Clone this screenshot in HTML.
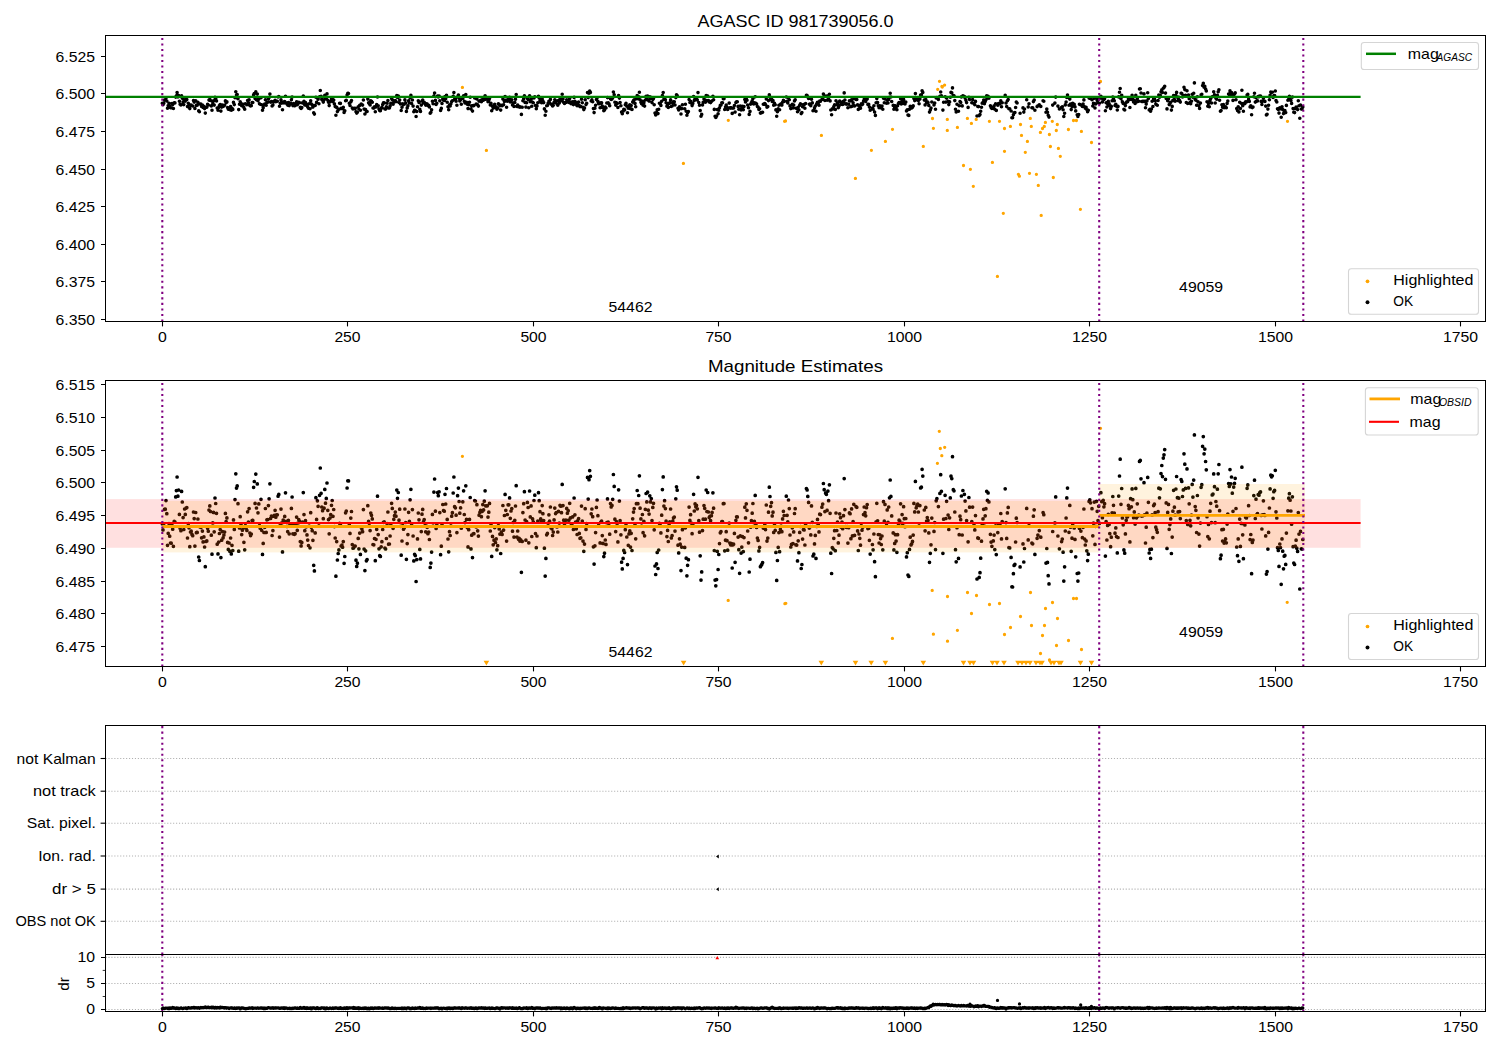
<!DOCTYPE html><html><head><meta charset="utf-8"><style>html,body{margin:0;padding:0;background:#fff;overflow:hidden}svg{display:block}</style></head><body><svg width="1500" height="1050" viewBox="0 0 1500 1050" font-family='"Liberation Sans", sans-serif'>
<rect width="1500" height="1050" fill="#fff"/>
<text x="795.5" y="27.2" font-size="17.00" text-anchor="middle" textLength="196.1" lengthAdjust="spacingAndGlyphs">AGASC ID 981739056.0</text>
<path d="M162.3 103.3h0M163.0 104.7h0M163.8 103.3h0M164.5 100.0h0M165.3 99.9h0M166.0 98.0h0M166.8 101.0h0M167.5 108.2h0M168.2 105.5h0M169.0 103.3h0M169.7 106.2h0M170.5 107.7h0M171.2 107.8h0M171.9 103.5h0M172.7 104.6h0M173.4 108.5h0M174.2 102.8h0M174.9 102.9h0M175.7 97.1h0M176.4 95.7h0M177.1 92.5h0M177.9 97.0h0M178.6 95.5h0M179.4 101.2h0M180.1 104.3h0M180.9 104.9h0M181.6 95.9h0M182.3 98.3h0M183.1 101.9h0M183.8 104.6h0M184.6 99.9h0M185.3 101.1h0M186.0 99.7h0M186.8 99.6h0M187.5 106.6h0M188.3 103.3h0M189.0 104.2h0M189.8 108.6h0M190.5 105.2h0M191.2 105.0h0M192.0 105.7h0M192.7 106.0h0M193.5 100.6h0M194.2 102.1h0M194.9 108.4h0M195.7 100.7h0M196.4 105.3h0M197.2 105.3h0M197.9 102.2h0M198.7 110.9h0M199.4 111.7h0M200.1 104.1h0M200.9 104.1h0M201.6 106.5h0M202.4 105.0h0M203.1 107.5h0M203.9 106.3h0M204.6 108.6h0M205.3 113.1h0M206.1 107.3h0M206.8 107.2h0M207.6 104.3h0M208.3 105.0h0M209.0 100.1h0M209.8 99.2h0M210.5 100.5h0M211.3 105.9h0M212.0 110.3h0M212.8 103.1h0M213.5 100.7h0M214.2 105.1h0M215.0 97.4h0M215.7 98.6h0M216.5 100.9h0M217.2 108.0h0M218.0 110.2h0M218.7 107.5h0M219.4 105.5h0M220.2 104.6h0M220.9 111.1h0M221.7 107.1h0M222.4 105.1h0M223.1 106.5h0M223.9 105.9h0M224.6 105.2h0M225.4 100.9h0M226.1 102.8h0M226.9 101.9h0M227.6 107.6h0M228.3 109.2h0M229.1 107.7h0M229.8 109.6h0M230.6 106.6h0M231.3 110.2h0M232.0 108.2h0M232.8 109.4h0M233.5 102.4h0M234.3 104.6h0M235.0 97.7h0M235.8 91.8h0M236.5 95.1h0M237.2 94.6h0M238.0 98.7h0M238.7 109.6h0M239.5 104.2h0M240.2 101.7h0M241.0 103.4h0M241.7 105.8h0M242.4 104.8h0M243.2 104.3h0M243.9 107.5h0M244.7 109.3h0M245.4 103.7h0M246.1 104.3h0M246.9 104.8h0M247.6 100.5h0M248.4 102.9h0M249.1 99.8h0M249.9 105.4h0M250.6 106.0h0M251.3 105.7h0M252.1 102.6h0M252.8 102.5h0M253.6 94.9h0M254.3 93.6h0M255.1 98.6h0M255.8 91.9h0M256.5 99.7h0M257.3 94.1h0M258.0 100.8h0M258.8 98.7h0M259.5 103.7h0M260.2 104.3h0M261.0 97.7h0M261.7 104.8h0M262.5 110.3h0M263.2 107.8h0M264.0 105.3h0M264.7 104.1h0M265.4 99.8h0M266.2 105.3h0M266.9 102.4h0M267.7 102.3h0M268.4 99.1h0M269.1 97.6h0M269.9 94.1h0M270.6 102.1h0M271.4 101.5h0M272.1 106.0h0M272.9 104.9h0M273.6 101.6h0M274.3 101.4h0M275.1 100.2h0M275.8 101.8h0M276.6 101.3h0M277.3 101.2h0M278.1 97.0h0M278.8 96.5h0M279.5 106.3h0M280.3 103.3h0M281.0 99.9h0M281.8 103.1h0M282.5 109.8h0M283.2 102.4h0M284.0 102.9h0M284.7 101.6h0M285.5 96.2h0M286.2 102.7h0M287.0 103.9h0M287.7 105.1h0M288.4 102.5h0M289.2 105.6h0M289.9 103.3h0M290.7 103.4h0M291.4 99.8h0M292.1 97.1h0M292.9 105.6h0M293.6 103.5h0M294.4 105.7h0M295.1 105.6h0M295.9 103.6h0M296.6 101.8h0M297.3 104.8h0M298.1 103.1h0M298.8 102.4h0M299.6 102.7h0M300.3 107.4h0M301.1 108.4h0M301.8 107.6h0M302.5 102.9h0M303.3 96.1h0M304.0 101.2h0M304.8 104.9h0M305.5 102.6h0M306.2 104.0h0M307.0 105.8h0M307.7 107.0h0M308.5 108.3h0M309.2 103.8h0M310.0 108.8h0M310.7 100.8h0M311.4 104.1h0M312.2 104.9h0M312.9 107.1h0M313.7 112.8h0M314.4 114.1h0M315.2 105.4h0M315.9 97.3h0M316.6 102.3h0M317.4 98.0h0M318.1 99.3h0M318.9 103.8h0M319.6 96.8h0M320.3 90.5h0M321.1 96.3h0M321.8 99.4h0M322.6 100.3h0M323.3 102.1h0M324.1 99.7h0M324.8 95.4h0M325.5 98.6h0M326.3 97.5h0M327.0 93.9h0M327.8 100.2h0M328.5 102.3h0M329.2 105.6h0M330.0 102.0h0M330.7 101.2h0M331.5 99.1h0M332.2 98.0h0M333.0 101.6h0M333.7 100.0h0M334.4 103.9h0M335.2 106.6h0M335.9 115.3h0M336.7 107.4h0M337.4 111.6h0M338.2 110.1h0M338.9 109.3h0M339.6 103.2h0M340.4 103.4h0M341.1 108.4h0M341.9 108.2h0M342.6 108.7h0M343.3 107.4h0M344.1 112.4h0M344.8 110.8h0M345.6 100.8h0M346.3 100.4h0M347.1 95.1h0M347.8 93.4h0M348.5 93.5h0M349.3 103.3h0M350.0 105.5h0M350.8 102.0h0M351.5 100.5h0M352.3 108.1h0M353.0 108.9h0M353.7 108.8h0M354.5 108.4h0M355.2 108.4h0M356.0 111.7h0M356.7 113.1h0M357.4 112.3h0M358.2 106.7h0M358.9 109.0h0M359.7 105.4h0M360.4 110.3h0M361.2 104.1h0M361.9 104.5h0M362.6 105.1h0M363.4 100.0h0M364.1 109.1h0M364.9 114.0h0M365.6 109.5h0M366.4 111.8h0M367.1 111.5h0M367.8 99.1h0M368.6 102.7h0M369.3 103.7h0M370.1 104.9h0M370.8 100.8h0M371.5 101.3h0M372.3 102.2h0M373.0 108.0h0M373.8 108.1h0M374.5 106.7h0M375.3 111.8h0M376.0 106.9h0M376.7 104.6h0M377.5 97.0h0M378.2 105.8h0M379.0 109.0h0M379.7 110.6h0M380.4 110.8h0M381.2 108.6h0M381.9 107.4h0M382.7 104.6h0M383.4 102.9h0M384.2 102.9h0M384.9 108.9h0M385.6 109.1h0M386.4 106.7h0M387.1 103.3h0M387.9 100.6h0M388.6 108.0h0M389.4 107.9h0M390.1 106.1h0M390.8 103.3h0M391.6 98.6h0M392.3 99.8h0M393.1 104.3h0M393.8 102.3h0M394.5 101.4h0M395.3 100.6h0M396.0 101.6h0M396.8 95.6h0M397.5 97.4h0M398.3 96.1h0M399.0 102.5h0M399.7 100.0h0M400.5 103.9h0M401.2 110.5h0M402.0 107.2h0M402.7 103.7h0M403.5 104.6h0M404.2 104.2h0M404.9 99.9h0M405.7 103.0h0M406.4 111.4h0M407.2 107.9h0M407.9 105.8h0M408.6 100.7h0M409.4 102.7h0M410.1 97.8h0M410.9 95.4h0M411.6 103.5h0M412.4 100.0h0M413.1 106.1h0M413.8 111.8h0M414.6 110.3h0M415.3 110.6h0M416.1 116.5h0M416.8 111.5h0M417.5 106.8h0M418.3 100.8h0M419.0 102.4h0M419.8 109.2h0M420.5 111.4h0M421.3 105.1h0M422.0 101.1h0M422.7 100.0h0M423.5 102.8h0M424.2 102.3h0M425.0 103.7h0M425.7 105.1h0M426.5 103.8h0M427.2 104.1h0M427.9 105.6h0M428.7 105.2h0M429.4 106.9h0M430.2 113.3h0M430.9 112.3h0M431.6 109.8h0M432.4 101.2h0M433.1 103.8h0M433.9 96.0h0M434.6 93.0h0M435.4 100.4h0M436.1 104.4h0M436.8 103.3h0M437.6 96.1h0M438.3 96.9h0M439.1 96.0h0M439.8 100.7h0M440.6 110.4h0M441.3 108.4h0M442.0 103.5h0M442.8 98.9h0M443.5 100.3h0M444.3 100.4h0M445.0 96.5h0M445.7 98.8h0M446.5 95.2h0M447.2 102.3h0M448.0 106.8h0M448.7 109.7h0M449.5 105.1h0M450.2 106.0h0M450.9 103.8h0M451.7 101.6h0M452.4 100.7h0M453.2 96.2h0M453.9 92.6h0M454.6 99.4h0M455.4 99.6h0M456.1 101.3h0M456.9 105.3h0M457.6 96.9h0M458.4 95.1h0M459.1 98.2h0M459.8 100.9h0M460.6 99.7h0M461.3 104.3h0M462.8 98.3h0M463.6 95.7h0M464.3 101.2h0M465.0 103.0h0M465.8 94.6h0M466.5 102.3h0M467.3 104.2h0M468.0 108.6h0M468.7 104.7h0M469.5 102.3h0M470.2 97.3h0M471.0 109.1h0M471.7 105.9h0M472.5 111.1h0M473.2 105.6h0M473.9 105.6h0M474.7 98.0h0M475.4 98.1h0M476.2 104.0h0M476.9 98.9h0M477.7 104.9h0M478.4 106.1h0M479.1 101.3h0M479.9 100.7h0M480.6 100.2h0M481.4 101.7h0M482.1 100.5h0M482.8 98.9h0M483.6 100.1h0M484.3 98.1h0M485.1 95.7h0M485.8 99.2h0M487.3 99.2h0M488.0 101.8h0M488.8 100.6h0M489.5 98.6h0M490.3 105.0h0M491.0 103.4h0M491.7 110.8h0M492.5 106.2h0M493.2 108.1h0M494.0 107.1h0M494.7 104.2h0M495.5 107.6h0M496.2 106.8h0M496.9 109.3h0M497.7 108.3h0M498.4 103.7h0M499.2 104.5h0M499.9 105.7h0M500.7 110.1h0M501.4 105.2h0M502.1 105.7h0M502.9 99.1h0M503.6 104.7h0M504.4 101.4h0M505.1 96.5h0M505.8 100.2h0M506.6 107.3h0M507.3 101.2h0M508.1 98.9h0M508.8 98.9h0M509.6 97.3h0M510.3 102.0h0M511.0 100.4h0M511.8 99.8h0M512.5 105.0h0M513.3 103.0h0M514.0 106.4h0M514.8 102.5h0M515.5 99.2h0M516.2 94.5h0M517.0 106.4h0M517.7 105.0h0M518.5 106.8h0M519.2 106.6h0M519.9 107.3h0M520.7 107.0h0M521.4 114.4h0M522.2 107.3h0M522.9 100.7h0M523.7 98.7h0M524.4 95.9h0M525.1 102.4h0M525.9 107.1h0M526.6 102.8h0M527.4 98.4h0M528.1 99.5h0M528.8 107.7h0M529.6 95.8h0M530.3 101.7h0M531.1 99.2h0M531.8 106.2h0M532.6 102.2h0M533.3 102.8h0M534.0 97.9h0M534.8 96.7h0M535.5 105.5h0M536.3 108.8h0M537.0 106.1h0M537.8 102.7h0M538.5 96.2h0M539.2 98.0h0M540.0 100.5h0M540.7 102.2h0M541.5 102.8h0M542.2 99.1h0M542.9 101.0h0M543.7 102.6h0M544.4 108.9h0M545.2 115.3h0M545.9 111.2h0M546.7 105.8h0M547.4 105.5h0M548.1 103.2h0M548.9 101.2h0M549.6 102.7h0M550.4 99.4h0M551.1 104.2h0M551.9 104.4h0M552.6 106.0h0M553.3 105.2h0M554.1 102.4h0M554.8 99.7h0M555.6 101.0h0M556.3 100.7h0M557.0 104.0h0M557.8 105.2h0M558.5 100.5h0M559.3 103.1h0M560.0 99.1h0M560.8 99.3h0M561.5 100.7h0M562.2 94.2h0M563.0 99.1h0M563.7 102.5h0M564.5 103.4h0M565.2 102.8h0M565.9 102.5h0M566.7 99.8h0M567.4 100.9h0M568.2 100.3h0M568.9 102.5h0M569.7 98.6h0M570.4 102.0h0M571.1 103.7h0M571.9 103.4h0M572.6 101.7h0M573.4 104.6h0M574.1 97.4h0M574.9 101.2h0M575.6 102.9h0M576.3 104.4h0M577.1 105.8h0M577.8 102.5h0M578.6 102.1h0M579.3 105.5h0M580.0 106.6h0M580.8 106.5h0M581.5 99.2h0M582.3 102.7h0M583.0 107.3h0M583.8 109.6h0M584.5 108.0h0M585.2 99.8h0M586.0 104.6h0M586.7 103.2h0M587.5 92.6h0M588.2 97.6h0M589.0 93.2h0M589.7 91.1h0M590.4 92.4h0M591.2 101.0h0M591.9 99.9h0M592.7 101.7h0M593.4 108.6h0M594.1 112.6h0M594.9 108.3h0M595.6 105.3h0M596.4 99.5h0M597.1 97.8h0M597.9 101.4h0M598.6 103.6h0M599.3 103.8h0M600.1 107.7h0M600.8 102.9h0M601.6 102.7h0M602.3 106.0h0M603.0 107.8h0M603.8 110.8h0M604.5 110.1h0M605.3 107.0h0M606.0 108.0h0M606.8 103.0h0M607.5 97.6h0M608.2 102.9h0M609.0 103.7h0M609.7 105.7h0M610.5 98.7h0M611.2 99.4h0M612.0 99.1h0M612.7 97.7h0M613.4 92.0h0M614.2 94.7h0M614.9 102.2h0M615.7 105.1h0M616.4 102.8h0M617.1 103.7h0M617.9 107.5h0M618.6 95.5h0M619.4 98.1h0M620.1 102.6h0M620.9 105.8h0M621.6 112.1h0M622.3 113.7h0M623.1 111.2h0M623.8 109.4h0M624.6 109.9h0M625.3 104.7h0M626.0 103.3h0M626.8 106.3h0M627.5 112.7h0M628.3 108.2h0M629.0 105.6h0M629.8 104.9h0M630.5 108.7h0M631.2 105.5h0M632.0 109.4h0M632.7 102.1h0M633.5 100.6h0M634.2 99.8h0M635.0 103.4h0M635.7 106.7h0M636.4 98.7h0M637.2 95.6h0M637.9 98.7h0M638.7 96.8h0M639.4 92.3h0M640.1 99.7h0M640.9 102.2h0M641.6 103.8h0M642.4 101.2h0M643.1 105.3h0M643.9 102.7h0M644.6 106.1h0M645.3 100.0h0M646.1 96.3h0M646.8 98.3h0M647.6 96.0h0M648.3 100.2h0M649.1 101.1h0M649.8 96.9h0M650.5 98.3h0M651.3 97.5h0M652.0 102.6h0M652.8 99.5h0M653.5 98.6h0M654.2 104.7h0M655.0 113.0h0M655.7 114.9h0M656.5 112.5h0M657.2 109.9h0M658.0 113.6h0M658.7 109.3h0M659.4 103.2h0M660.2 103.6h0M660.9 105.4h0M661.7 101.3h0M662.4 95.5h0M663.2 92.5h0M663.9 99.2h0M664.6 98.0h0M665.4 99.8h0M666.1 102.7h0M666.9 106.2h0M667.6 104.8h0M668.3 107.4h0M669.1 103.4h0M669.8 102.9h0M670.6 99.9h0M671.3 106.5h0M672.1 106.0h0M672.8 102.7h0M673.5 101.9h0M674.3 101.8h0M675.0 105.0h0M675.8 97.6h0M676.5 94.8h0M677.2 95.6h0M678.0 108.2h0M678.7 110.0h0M679.5 106.7h0M680.2 108.0h0M681.0 114.0h0M681.7 108.6h0M682.4 104.7h0M684.7 108.7h0M685.4 104.2h0M686.2 111.2h0M686.9 115.2h0M687.6 112.8h0M688.4 111.6h0M689.1 99.5h0M689.9 102.5h0M690.6 101.2h0M691.3 103.1h0M692.1 105.6h0M692.8 103.4h0M693.6 96.5h0M694.3 100.4h0M695.1 98.7h0M695.8 99.4h0M696.5 99.1h0M697.3 99.9h0M698.0 92.6h0M698.8 102.6h0M699.5 105.2h0M700.2 110.6h0M701.0 116.2h0M701.7 114.4h0M702.5 104.9h0M703.2 102.2h0M704.0 99.1h0M704.7 99.7h0M705.4 102.2h0M706.2 95.5h0M706.9 100.5h0M707.7 96.1h0M708.4 100.6h0M709.2 101.9h0M709.9 101.6h0M710.6 102.6h0M711.4 101.4h0M712.1 100.7h0M712.9 96.2h0M713.6 99.7h0M714.3 109.4h0M715.1 116.2h0M715.8 117.5h0M716.6 116.1h0M717.3 109.6h0M718.1 113.8h0M718.8 110.3h0M719.5 107.8h0M720.3 105.4h0M721.0 105.1h0M721.8 102.8h0M722.5 102.8h0M723.3 98.7h0M724.0 98.7h0M724.7 109.5h0M725.5 107.1h0M726.2 105.1h0M727.0 107.2h0M727.7 109.4h0M729.2 103.1h0M729.9 107.7h0M730.7 108.1h0M731.4 107.9h0M732.2 113.4h0M732.9 108.1h0M733.6 108.0h0M734.4 105.5h0M735.1 112.1h0M735.9 102.5h0M736.6 101.7h0M737.3 101.7h0M738.1 106.4h0M738.8 109.3h0M739.6 114.7h0M740.3 106.0h0M741.1 110.0h0M741.8 108.7h0M742.5 106.2h0M743.3 109.7h0M744.0 106.5h0M744.8 99.5h0M745.5 101.9h0M746.3 98.7h0M747.0 100.2h0M747.7 105.0h0M748.5 107.7h0M749.2 114.4h0M750.0 111.4h0M750.7 104.1h0M751.4 102.6h0M752.2 100.9h0M752.9 98.6h0M753.7 103.9h0M754.4 102.7h0M755.2 96.8h0M755.9 103.4h0M756.6 104.1h0M757.4 106.6h0M758.1 107.1h0M758.9 109.5h0M759.6 108.7h0M760.4 113.1h0M761.1 112.9h0M761.8 112.6h0M762.6 112.2h0M763.3 104.3h0M764.1 104.3h0M764.8 103.5h0M765.5 104.6h0M766.3 99.0h0M767.0 107.3h0M767.8 106.6h0M768.5 100.6h0M769.3 94.9h0M770.0 97.0h0M770.7 99.3h0M771.5 98.4h0M772.2 101.5h0M773.0 100.6h0M773.7 105.3h0M774.5 103.4h0M775.2 104.8h0M775.9 109.9h0M776.7 116.3h0M777.4 111.7h0M778.2 108.7h0M778.9 105.3h0M779.6 109.7h0M780.4 104.6h0M781.1 103.8h0M781.9 105.1h0M782.6 102.2h0M783.4 100.4h0M784.1 101.4h0M786.3 97.0h0M787.1 101.3h0M787.8 102.9h0M788.5 97.8h0M789.3 99.8h0M790.0 105.9h0M790.8 108.6h0M791.5 108.0h0M792.3 104.2h0M793.0 107.9h0M793.7 105.1h0M794.5 100.9h0M795.2 99.8h0M796.0 108.2h0M796.7 108.2h0M797.5 111.8h0M798.2 107.2h0M798.9 109.9h0M799.7 105.3h0M800.4 103.9h0M801.2 113.6h0M801.9 112.6h0M802.6 106.8h0M803.4 104.6h0M804.1 104.7h0M804.9 108.2h0M805.6 103.5h0M806.4 95.2h0M807.1 95.5h0M807.8 97.0h0M808.6 98.4h0M809.3 104.3h0M810.1 104.0h0M810.8 105.8h0M811.5 99.2h0M812.3 102.9h0M813.0 110.7h0M813.8 110.3h0M814.5 107.9h0M815.3 106.0h0M816.0 111.2h0M816.7 103.9h0M817.5 102.3h0M818.2 103.5h0M819.0 105.2h0M819.7 101.1h0M820.5 101.2h0M821.9 99.5h0M822.7 98.8h0M823.4 94.0h0M824.2 95.5h0M824.9 100.5h0M825.6 96.3h0M826.4 96.5h0M827.1 100.2h0M827.9 95.8h0M828.6 98.0h0M829.4 94.3h0M830.1 100.9h0M830.8 110.0h0M831.6 114.7h0M832.3 108.7h0M833.1 109.0h0M833.8 106.6h0M834.6 104.9h0M835.3 109.5h0M836.0 100.8h0M836.8 104.8h0M837.5 102.9h0M838.3 107.7h0M839.0 105.9h0M839.7 101.0h0M840.5 101.9h0M841.2 104.1h0M842.0 102.9h0M842.7 104.4h0M843.5 101.4h0M844.2 92.9h0M844.9 100.0h0M845.7 103.9h0M846.4 104.1h0M847.2 104.0h0M847.9 107.7h0M848.7 104.2h0M849.4 100.8h0M850.1 101.0h0M850.9 106.7h0M851.6 99.9h0M852.4 106.1h0M853.1 102.8h0M853.8 98.8h0M854.6 105.9h0M856.1 99.4h0M856.8 99.5h0M857.6 104.9h0M858.3 109.4h0M859.0 105.6h0M859.8 106.6h0M860.5 108.2h0M861.3 103.7h0M862.0 104.8h0M862.7 104.1h0M863.5 101.2h0M864.2 99.4h0M865.0 100.8h0M865.7 101.5h0M866.5 99.6h0M867.2 98.9h0M867.9 104.4h0M868.7 104.3h0M869.4 107.1h0M870.2 110.2h0M872.4 108.1h0M873.1 109.3h0M873.9 105.7h0M874.6 112.0h0M875.4 115.4h0M876.1 102.8h0M876.8 98.6h0M877.6 102.6h0M878.3 105.7h0M879.1 107.7h0M879.8 105.8h0M880.6 106.7h0M881.3 108.0h0M882.0 106.1h0M882.8 109.3h0M883.5 98.2h0M884.3 102.7h0M885.0 98.9h0M886.5 103.2h0M887.2 100.1h0M888.0 103.0h0M888.7 99.4h0M889.5 97.3h0M890.2 93.3h0M890.9 97.0h0M891.7 101.5h0M893.2 105.4h0M893.9 109.3h0M894.7 107.8h0M895.4 105.8h0M896.1 107.3h0M896.9 109.8h0M897.6 105.8h0M898.4 103.6h0M899.1 102.5h0M899.8 102.7h0M900.6 98.7h0M901.3 103.9h0M902.1 101.2h0M902.8 103.2h0M903.6 99.4h0M904.3 102.1h0M905.0 104.0h0M905.8 102.1h0M906.5 110.9h0M907.3 109.9h0M908.0 115.1h0M908.8 115.4h0M909.5 109.2h0M910.2 106.4h0M911.0 108.1h0M911.7 107.9h0M912.5 107.3h0M913.2 105.9h0M913.9 98.6h0M914.7 100.6h0M915.4 93.6h0M916.2 99.7h0M916.9 99.2h0M917.7 98.8h0M918.4 100.6h0M919.1 103.8h0M919.9 99.1h0M920.6 95.0h0M921.4 94.9h0M922.1 90.8h0M922.8 92.4h0M924.3 100.1h0M925.1 104.9h0M925.8 99.5h0M926.6 102.6h0M927.3 101.9h0M928.0 102.5h0M928.8 105.4h0M929.5 112.1h0M930.3 110.1h0M931.0 108.1h0M931.8 102.0h0M934.0 105.0h0M934.7 103.0h0M935.5 109.2h0M936.2 98.0h0M936.9 97.5h0M938.4 99.4h0M939.9 96.3h0M940.7 92.0h0M941.4 95.8h0M942.9 110.1h0M943.6 102.2h0M945.1 96.8h0M945.9 102.1h0M946.6 98.1h0M948.1 101.3h0M948.8 104.6h0M949.6 101.9h0M950.3 97.3h0M951.0 92.4h0M951.8 92.9h0M952.5 87.9h0M953.3 95.5h0M954.0 95.7h0M954.8 100.6h0M955.5 109.3h0M956.2 112.0h0M957.0 104.2h0M958.5 111.3h0M959.2 105.8h0M960.0 101.5h0M960.7 102.4h0M961.4 96.9h0M962.2 105.9h0M962.9 95.7h0M964.4 96.5h0M965.1 98.1h0M965.9 100.3h0M966.6 102.6h0M968.1 107.4h0M968.9 97.3h0M969.6 99.5h0M971.8 102.8h0M972.6 99.5h0M974.0 103.4h0M974.8 104.7h0M975.5 101.4h0M977.0 116.0h0M977.8 106.5h0M978.5 106.6h0M979.2 115.6h0M980.0 114.5h0M980.7 111.2h0M981.5 107.3h0M982.2 103.3h0M983.0 102.2h0M983.7 100.0h0M984.4 103.8h0M985.2 101.5h0M985.9 99.8h0M986.7 95.8h0M987.4 97.9h0M988.1 96.2h0M988.9 98.3h0M990.4 105.7h0M991.1 107.5h0M991.9 108.5h0M993.3 107.2h0M994.1 105.9h0M994.8 109.2h0M995.6 103.7h0M996.3 110.4h0M997.8 105.3h0M998.5 103.6h0M1000.0 103.6h0M1000.8 100.9h0M1001.5 106.8h0M1002.2 102.8h0M1005.2 95.3h0M1006.0 103.0h0M1006.7 106.6h0M1007.4 100.8h0M1008.2 99.5h0M1008.9 108.8h0M1009.7 108.8h0M1011.1 111.0h0M1011.9 117.8h0M1012.6 117.8h0M1013.4 114.8h0M1014.1 112.8h0M1014.9 112.6h0M1015.6 107.5h0M1016.3 102.0h0M1017.1 103.0h0M1020.1 113.2h0M1023.0 107.9h0M1023.8 112.1h0M1024.5 109.0h0M1026.7 99.8h0M1028.2 107.0h0M1029.0 103.7h0M1031.9 107.7h0M1032.7 107.9h0M1033.4 101.6h0M1034.2 100.1h0M1034.9 110.3h0M1037.1 106.6h0M1037.9 105.9h0M1039.3 104.9h0M1040.8 106.4h0M1043.1 100.7h0M1043.8 101.2h0M1046.0 112.3h0M1046.8 109.0h0M1047.5 112.2h0M1048.2 115.2h0M1049.0 117.1h0M1052.7 105.1h0M1054.9 103.1h0M1055.7 97.1h0M1057.9 106.1h0M1059.4 109.0h0M1061.6 107.4h0M1062.3 106.8h0M1063.1 109.8h0M1063.8 116.5h0M1064.6 113.2h0M1065.3 104.9h0M1066.1 102.0h0M1066.8 97.4h0M1067.5 95.1h0M1069.0 105.2h0M1069.8 99.1h0M1070.5 104.1h0M1071.2 109.6h0M1072.0 106.6h0M1072.7 103.4h0M1074.2 104.2h0M1075.0 106.9h0M1075.7 110.9h0M1077.2 114.7h0M1077.9 116.4h0M1078.7 114.6h0M1079.4 104.3h0M1080.9 105.0h0M1082.4 106.5h0M1083.1 104.1h0M1083.9 99.9h0M1084.6 106.8h0M1085.3 108.2h0M1086.1 107.2h0M1086.8 109.5h0M1087.6 111.7h0M1088.3 110.3h0M1089.1 98.1h0M1089.8 97.8h0M1090.5 98.5h0M1092.0 99.8h0M1092.8 106.0h0M1093.5 103.2h0M1094.3 98.3h0M1095.0 108.0h0M1095.7 103.9h0M1096.5 98.1h0M1097.2 100.4h0M1098.0 102.6h0M1098.7 99.3h0M1099.4 103.2h0M1100.9 96.2h0M1101.7 98.2h0M1102.4 101.9h0M1103.2 97.9h0M1103.9 99.4h0M1104.6 98.7h0M1105.4 110.7h0M1106.1 102.8h0M1106.9 107.0h0M1107.6 103.7h0M1108.3 101.2h0M1109.1 103.5h0M1109.8 105.6h0M1110.6 108.6h0M1111.3 106.4h0M1112.1 100.8h0M1112.8 97.0h0M1113.5 99.1h0M1114.3 100.8h0M1115.0 105.5h0M1115.8 104.2h0M1116.5 106.2h0M1117.3 110.0h0M1118.0 106.4h0M1118.7 96.9h0M1119.5 92.3h0M1120.2 88.5h0M1121.0 98.8h0M1121.7 95.2h0M1122.4 101.9h0M1123.2 103.5h0M1123.9 109.3h0M1124.7 110.0h0M1125.4 105.6h0M1126.2 102.5h0M1126.9 101.8h0M1127.6 101.7h0M1128.4 99.1h0M1129.1 99.8h0M1129.9 107.5h0M1130.6 97.5h0M1131.4 99.4h0M1132.1 95.3h0M1132.8 97.8h0M1133.6 101.9h0M1134.3 100.6h0M1135.1 103.4h0M1135.8 95.2h0M1136.5 101.9h0M1137.3 98.7h0M1138.0 101.5h0M1138.8 101.3h0M1139.5 89.0h0M1140.3 88.7h0M1141.0 93.0h0M1141.7 101.5h0M1142.5 101.5h0M1143.2 101.4h0M1144.0 93.9h0M1144.7 101.2h0M1145.5 107.7h0M1146.2 104.1h0M1146.9 100.9h0M1147.7 92.7h0M1148.4 98.4h0M1149.2 110.0h0M1149.9 109.2h0M1150.6 111.2h0M1151.4 109.1h0M1152.1 101.3h0M1152.9 106.5h0M1153.6 99.1h0M1154.4 98.8h0M1155.1 100.7h0M1155.8 104.1h0M1156.6 104.7h0M1157.3 105.3h0M1158.1 100.5h0M1158.8 95.1h0M1159.5 97.3h0M1160.3 95.3h0M1161.0 91.8h0M1161.8 89.9h0M1162.5 92.5h0M1163.3 88.2h0M1164.0 87.5h0M1164.7 86.3h0M1165.5 93.1h0M1166.2 98.5h0M1167.0 108.9h0M1167.7 100.7h0M1168.5 98.8h0M1169.2 104.6h0M1169.9 103.5h0M1170.7 102.2h0M1171.4 110.1h0M1172.2 106.4h0M1172.9 100.4h0M1173.6 95.6h0M1174.4 99.5h0M1175.1 101.3h0M1175.9 95.3h0M1176.6 92.4h0M1177.4 97.3h0M1178.1 100.6h0M1178.8 97.4h0M1179.6 100.5h0M1180.3 102.1h0M1181.1 93.2h0M1181.8 93.6h0M1182.5 97.0h0M1183.3 95.5h0M1184.0 87.2h0M1184.8 89.6h0M1185.5 95.2h0M1186.3 102.5h0M1187.0 90.7h0M1187.7 103.5h0M1188.5 95.1h0M1189.2 98.7h0M1190.0 102.5h0M1190.7 103.8h0M1191.5 101.3h0M1192.2 94.3h0M1192.9 97.2h0M1193.7 93.3h0M1194.4 82.9h0M1195.2 99.4h0M1195.9 100.2h0M1196.6 105.3h0M1197.4 96.8h0M1198.1 101.9h0M1198.9 105.7h0M1199.6 108.4h0M1200.4 103.1h0M1201.1 94.9h0M1201.8 94.3h0M1202.6 85.5h0M1203.3 83.3h0M1204.1 87.2h0M1204.8 86.2h0M1205.6 89.0h0M1206.3 90.9h0M1207.0 101.7h0M1207.8 106.2h0M1208.5 103.5h0M1209.3 106.7h0M1210.0 100.4h0M1210.7 98.6h0M1211.5 103.0h0M1212.2 96.7h0M1213.0 96.5h0M1213.7 91.8h0M1214.5 94.8h0M1215.2 103.0h0M1215.9 98.2h0M1216.7 99.3h0M1217.4 95.4h0M1218.2 91.8h0M1218.9 89.7h0M1219.6 100.3h0M1220.4 111.3h0M1221.1 110.5h0M1221.9 104.7h0M1222.6 107.2h0M1223.4 104.6h0M1224.1 107.7h0M1224.8 107.4h0M1225.6 106.8h0M1226.3 107.7h0M1227.1 103.4h0M1227.8 101.0h0M1228.6 94.0h0M1229.3 94.7h0M1230.0 90.9h0M1230.8 94.1h0M1231.5 92.6h0M1232.3 96.3h0M1233.0 100.4h0M1233.7 94.9h0M1234.5 94.0h0M1235.2 92.9h0M1236.0 99.8h0M1236.7 108.6h0M1237.5 110.6h0M1238.2 106.8h0M1238.9 111.9h0M1239.7 102.2h0M1240.4 108.5h0M1241.2 103.2h0M1241.9 90.3h0M1242.7 105.8h0M1243.4 111.3h0M1244.1 103.3h0M1244.9 103.6h0M1245.6 101.8h0M1246.4 101.9h0M1247.1 95.1h0M1247.8 94.4h0M1248.6 99.2h0M1249.3 101.4h0M1250.1 106.9h0M1250.8 105.8h0M1251.6 114.8h0M1252.3 107.6h0M1253.0 107.0h0M1253.8 96.8h0M1254.5 93.3h0M1255.3 102.1h0M1256.0 97.7h0M1256.8 101.2h0M1257.5 100.9h0M1258.2 96.6h0M1259.0 96.7h0M1259.7 96.1h0M1260.5 96.0h0M1261.2 101.4h0M1261.9 104.5h0M1262.7 101.2h0M1263.4 98.0h0M1264.2 101.2h0M1264.9 101.4h0M1265.7 106.1h0M1266.4 114.9h0M1267.1 114.3h0M1267.9 109.1h0M1268.6 105.3h0M1269.4 99.7h0M1270.1 95.3h0M1270.8 92.1h0M1271.6 92.5h0M1272.3 92.3h0M1273.1 97.5h0M1273.8 95.9h0M1274.6 95.6h0M1275.3 91.0h0M1276.0 100.5h0M1276.8 102.0h0M1277.5 108.8h0M1278.3 109.4h0M1279.0 113.1h0M1279.8 107.9h0M1280.5 108.8h0M1281.2 117.2h0M1282.0 106.8h0M1282.7 109.6h0M1283.5 113.6h0M1284.2 110.7h0M1284.9 110.6h0M1285.7 112.6h0M1286.4 105.4h0M1287.9 100.3h0M1288.7 97.4h0M1289.4 96.4h0M1290.1 97.9h0M1290.9 100.4h0M1291.6 103.4h0M1292.4 97.1h0M1293.1 108.6h0M1293.8 112.3h0M1294.6 112.6h0M1295.3 108.4h0M1296.1 107.1h0M1296.8 108.9h0M1297.6 109.6h0M1298.3 100.7h0M1299.0 105.7h0M1299.8 118.3h0M1300.5 105.0h0M1301.3 109.0h0M1302.0 109.1h0M1302.8 106.9h0" stroke="#000" stroke-width="3.60" stroke-linecap="round" fill="none"/>
<path d="M462.4 87.4h0M486.4 150.4h0M683.4 163.4h0M728.3 120.3h0M784.6 121.3h0M785.5 121.0h0M821.4 135.4h0M855.4 178.4h0M871.4 150.3h0M885.4 141.4h0M892.5 129.3h0M923.3 146.4h0M932.5 118.5h0M933.4 128.3h0M947.3 119.4h0M947.3 130.4h0M939.5 81.3h0M937.7 89.3h0M942.3 87.0h0M944.6 85.1h0M941.9 86.5h0M957.4 127.4h0M967.4 118.4h0M971.4 123.4h0M976.2 119.4h0M963.5 165.5h0M970.4 169.3h0M973.3 186.3h0M989.4 121.3h0M992.4 162.4h0M999.5 121.3h0M1004.5 128.5h0M1004.5 151.3h0M1003.3 213.3h0M997.4 276.4h0M1010.4 126.4h0M1020.5 124.5h0M1021.5 135.4h0M1027.4 141.4h0M1025.3 152.3h0M1018.4 174.3h0M1019.4 176.2h0M1029.5 173.3h0M1036.4 174.3h0M1038.3 185.4h0M1041.2 215.4h0M1030.3 118.4h0M1031.3 126.4h0M1040.4 132.4h0M1042.5 128.5h0M1044.3 126.4h0M1045.4 122.4h0M1049.4 134.5h0M1050.4 146.5h0M1052.3 121.3h0M1056.3 130.5h0M1057.3 124.5h0M1058.4 148.4h0M1060.3 156.3h0M1053.3 177.5h0M1068.4 129.5h0M1073.5 120.5h0M1076.4 120.5h0M1081.4 131.4h0M1080.4 209.3h0M1091.5 142.5h0M1100.5 81.5h0M1287.5 121.3h0" stroke="#ffa500" stroke-width="3.30" stroke-linecap="round" fill="none"/>
<line x1="105.5" y1="96.9" x2="1360.6" y2="96.9" stroke="#008000" stroke-width="2.2"/>
<line x1="162.3" y1="321.5" x2="162.3" y2="35.5" stroke="#800080" stroke-width="2.08" stroke-dasharray="2.08 3.44"/>
<line x1="1099.2" y1="321.5" x2="1099.2" y2="35.5" stroke="#800080" stroke-width="2.08" stroke-dasharray="2.08 3.44"/>
<line x1="1303.3" y1="321.5" x2="1303.3" y2="35.5" stroke="#800080" stroke-width="2.08" stroke-dasharray="2.08 3.44"/>
<text x="630.5" y="311.9" font-size="14.17" text-anchor="middle" textLength="43.9" lengthAdjust="spacingAndGlyphs">54462</text>
<text x="1201.1" y="291.5" font-size="14.17" text-anchor="middle" textLength="44.0" lengthAdjust="spacingAndGlyphs">49059</text>
<rect x="105.5" y="35.5" width="1380.0" height="286.0" fill="none" stroke="#000" stroke-width="1.0" shape-rendering="crispEdges"/>
<line x1="162.5" y1="321.5" x2="162.5" y2="326.4" stroke="#000" stroke-width="1.1"/>
<text x="162.5" y="342.1" font-size="14.17" text-anchor="middle" textLength="8.8" lengthAdjust="spacingAndGlyphs">0</text>
<line x1="347.5" y1="321.5" x2="347.5" y2="326.4" stroke="#000" stroke-width="1.1"/>
<text x="347.5" y="342.1" font-size="14.17" text-anchor="middle" textLength="26.2" lengthAdjust="spacingAndGlyphs">250</text>
<line x1="533.5" y1="321.5" x2="533.5" y2="326.4" stroke="#000" stroke-width="1.1"/>
<text x="533.5" y="342.1" font-size="14.17" text-anchor="middle" textLength="26.2" lengthAdjust="spacingAndGlyphs">500</text>
<line x1="718.5" y1="321.5" x2="718.5" y2="326.4" stroke="#000" stroke-width="1.1"/>
<text x="718.5" y="342.1" font-size="14.17" text-anchor="middle" textLength="26.2" lengthAdjust="spacingAndGlyphs">750</text>
<line x1="904.5" y1="321.5" x2="904.5" y2="326.4" stroke="#000" stroke-width="1.1"/>
<text x="904.5" y="342.1" font-size="14.17" text-anchor="middle" textLength="35.1" lengthAdjust="spacingAndGlyphs">1000</text>
<line x1="1089.5" y1="321.5" x2="1089.5" y2="326.4" stroke="#000" stroke-width="1.1"/>
<text x="1089.5" y="342.1" font-size="14.17" text-anchor="middle" textLength="35.1" lengthAdjust="spacingAndGlyphs">1250</text>
<line x1="1275.5" y1="321.5" x2="1275.5" y2="326.4" stroke="#000" stroke-width="1.1"/>
<text x="1275.5" y="342.1" font-size="14.17" text-anchor="middle" textLength="35.1" lengthAdjust="spacingAndGlyphs">1500</text>
<line x1="1460.5" y1="321.5" x2="1460.5" y2="326.4" stroke="#000" stroke-width="1.1"/>
<text x="1460.5" y="342.1" font-size="14.17" text-anchor="middle" textLength="35.1" lengthAdjust="spacingAndGlyphs">1750</text>
<line x1="100.6" y1="319.5" x2="105.5" y2="319.5" stroke="#000" stroke-width="1.0" shape-rendering="crispEdges"/>
<text x="95.1" y="324.5" font-size="14.17" text-anchor="end" textLength="39.5" lengthAdjust="spacingAndGlyphs">6.350</text>
<line x1="100.6" y1="281.5" x2="105.5" y2="281.5" stroke="#000" stroke-width="1.0" shape-rendering="crispEdges"/>
<text x="95.1" y="286.5" font-size="14.17" text-anchor="end" textLength="39.5" lengthAdjust="spacingAndGlyphs">6.375</text>
<line x1="100.6" y1="244.5" x2="105.5" y2="244.5" stroke="#000" stroke-width="1.0" shape-rendering="crispEdges"/>
<text x="95.1" y="249.5" font-size="14.17" text-anchor="end" textLength="39.5" lengthAdjust="spacingAndGlyphs">6.400</text>
<line x1="100.6" y1="206.5" x2="105.5" y2="206.5" stroke="#000" stroke-width="1.0" shape-rendering="crispEdges"/>
<text x="95.1" y="211.5" font-size="14.17" text-anchor="end" textLength="39.5" lengthAdjust="spacingAndGlyphs">6.425</text>
<line x1="100.6" y1="169.5" x2="105.5" y2="169.5" stroke="#000" stroke-width="1.0" shape-rendering="crispEdges"/>
<text x="95.1" y="174.5" font-size="14.17" text-anchor="end" textLength="39.5" lengthAdjust="spacingAndGlyphs">6.450</text>
<line x1="100.6" y1="131.5" x2="105.5" y2="131.5" stroke="#000" stroke-width="1.0" shape-rendering="crispEdges"/>
<text x="95.1" y="136.5" font-size="14.17" text-anchor="end" textLength="39.5" lengthAdjust="spacingAndGlyphs">6.475</text>
<line x1="100.6" y1="93.5" x2="105.5" y2="93.5" stroke="#000" stroke-width="1.0" shape-rendering="crispEdges"/>
<text x="95.1" y="98.5" font-size="14.17" text-anchor="end" textLength="39.5" lengthAdjust="spacingAndGlyphs">6.500</text>
<line x1="100.6" y1="56.5" x2="105.5" y2="56.5" stroke="#000" stroke-width="1.0" shape-rendering="crispEdges"/>
<text x="95.1" y="61.5" font-size="14.17" text-anchor="end" textLength="39.5" lengthAdjust="spacingAndGlyphs">6.525</text>
<rect x="1361.3" y="42.5" width="117.2" height="27.0" rx="2.8" fill="#fff" fill-opacity="0.8" stroke="#d5d5d5" stroke-width="1.1"/>
<line x1="1366" y1="53.8" x2="1396" y2="53.8" stroke="#008000" stroke-width="2.5"/>
<text x="1407.8" y="59.0" font-size="14.17" text-anchor="start" textLength="31.0" lengthAdjust="spacingAndGlyphs">mag</text>
<text x="1436.5" y="60.5" font-size="10.48" text-anchor="start" textLength="35.6" lengthAdjust="spacingAndGlyphs" font-style="italic">AGASC</text>
<rect x="1348.5" y="268.7" width="130.0" height="45.6" rx="2.8" fill="#fff" fill-opacity="0.8" stroke="#d5d5d5" stroke-width="1.1"/>
<circle cx="1367.5" cy="281.3" r="1.85" fill="#ffa500"/>
<circle cx="1367.5" cy="302.3" r="1.95" fill="#000"/>
<text x="1393.3" y="284.7" font-size="14.17" text-anchor="start" textLength="80.1" lengthAdjust="spacingAndGlyphs">Highlighted</text>
<text x="1393.3" y="305.7" font-size="14.17" text-anchor="start" textLength="19.9" lengthAdjust="spacingAndGlyphs">OK</text>
<text x="795.5" y="371.7" font-size="17.00" text-anchor="middle" textLength="175.2" lengthAdjust="spacingAndGlyphs">Magnitude Estimates</text>
<g clip-path="url(#c2)">
<path d="M162.3 523.8h0M163.0 529.9h0M163.8 523.6h0M164.5 509.4h0M165.3 509.2h0M166.0 500.6h0M166.8 513.7h0M167.5 545.3h0M168.2 533.3h0M169.0 523.6h0M169.7 536.2h0M170.5 543.0h0M171.2 543.2h0M171.9 524.9h0M172.7 529.2h0M173.4 546.3h0M174.2 521.4h0M174.9 521.9h0M175.7 496.9h0M176.4 490.6h0M177.1 477.0h0M177.9 496.2h0M178.6 490.0h0M179.4 514.4h0M180.1 528.2h0M180.9 530.7h0M181.6 491.4h0M182.3 502.0h0M183.1 517.6h0M183.8 529.5h0M184.6 509.0h0M185.3 514.4h0M186.0 508.2h0M186.8 507.5h0M187.5 538.0h0M188.3 523.7h0M189.0 527.8h0M189.8 546.7h0M190.5 532.0h0M191.2 531.2h0M192.0 534.4h0M192.7 535.7h0M193.5 512.0h0M194.2 518.6h0M194.9 546.1h0M195.7 512.5h0M196.4 532.7h0M197.2 532.4h0M197.9 519.0h0M198.7 557.0h0M199.4 560.5h0M200.1 527.1h0M200.9 527.4h0M201.6 537.8h0M202.4 531.1h0M203.1 541.9h0M203.9 536.9h0M204.6 547.0h0M205.3 566.7h0M206.1 541.4h0M206.8 540.9h0M207.6 528.2h0M208.3 531.2h0M209.0 510.1h0M209.8 505.9h0M210.5 511.5h0M211.3 535.2h0M212.0 554.2h0M212.8 522.9h0M213.5 512.4h0M214.2 531.8h0M215.0 498.0h0M215.7 503.5h0M216.5 513.3h0M217.2 544.2h0M218.0 553.9h0M218.7 542.0h0M219.4 533.5h0M220.2 529.6h0M220.9 557.6h0M221.7 540.2h0M222.4 531.6h0M223.1 537.8h0M223.9 535.0h0M224.6 532.0h0M225.4 513.4h0M226.1 521.6h0M226.9 517.9h0M227.6 542.4h0M228.3 549.4h0M229.1 543.0h0M229.8 551.2h0M230.6 538.0h0M231.3 553.9h0M232.0 545.3h0M232.8 550.5h0M233.5 519.9h0M234.3 529.4h0M235.0 499.6h0M235.8 473.8h0M236.5 488.1h0M237.2 485.9h0M238.0 503.7h0M238.7 551.2h0M239.5 527.9h0M240.2 516.7h0M241.0 524.2h0M241.7 534.6h0M242.4 530.2h0M243.2 528.0h0M243.9 542.3h0M244.7 549.8h0M245.4 525.7h0M246.1 528.2h0M246.9 530.4h0M247.6 511.8h0M248.4 522.2h0M249.1 508.6h0M249.9 533.0h0M250.6 535.6h0M251.3 534.0h0M252.1 520.6h0M252.8 520.4h0M253.6 487.3h0M254.3 481.5h0M255.1 503.4h0M255.8 474.1h0M256.5 508.0h0M257.3 483.9h0M258.0 512.8h0M258.8 503.9h0M259.5 525.5h0M260.2 528.2h0M261.0 499.3h0M261.7 530.3h0M262.5 554.4h0M263.2 543.4h0M264.0 532.5h0M264.7 527.3h0M265.4 508.5h0M266.2 532.4h0M266.9 519.8h0M267.7 519.5h0M268.4 505.6h0M269.1 498.8h0M269.9 483.8h0M270.6 518.4h0M271.4 516.1h0M272.1 535.5h0M272.9 530.6h0M273.6 516.2h0M274.3 515.3h0M275.1 510.3h0M275.8 517.2h0M276.6 514.9h0M277.3 514.8h0M278.1 496.2h0M278.8 494.4h0M279.5 537.1h0M280.3 523.9h0M281.0 509.1h0M281.8 522.9h0M282.5 551.9h0M283.2 520.0h0M284.0 522.1h0M284.7 516.4h0M285.5 492.8h0M286.2 521.3h0M287.0 526.4h0M287.7 531.6h0M288.4 520.4h0M289.2 533.8h0M289.9 523.9h0M290.7 524.0h0M291.4 508.4h0M292.1 497.0h0M292.9 533.8h0M293.6 524.8h0M294.4 534.3h0M295.1 533.7h0M295.9 525.2h0M296.6 517.1h0M297.3 530.3h0M298.1 522.9h0M298.8 519.7h0M299.6 521.3h0M300.3 541.6h0M301.1 545.9h0M301.8 542.4h0M302.5 522.0h0M303.3 492.6h0M304.0 514.6h0M304.8 530.7h0M305.5 520.7h0M306.2 526.8h0M307.0 534.9h0M307.7 540.1h0M308.5 545.5h0M309.2 526.0h0M310.0 547.8h0M310.7 512.7h0M311.4 527.3h0M312.2 530.7h0M312.9 540.3h0M313.7 565.3h0M314.4 570.9h0M315.2 532.9h0M315.9 497.7h0M316.6 519.4h0M317.4 500.8h0M318.1 506.3h0M318.9 525.9h0M319.6 495.3h0M320.3 468.0h0M321.1 493.3h0M321.8 507.0h0M322.6 510.7h0M323.3 518.7h0M324.1 508.2h0M324.8 489.4h0M325.5 503.2h0M326.3 498.4h0M327.0 483.0h0M327.8 510.3h0M328.5 519.6h0M329.2 533.8h0M330.0 518.1h0M330.7 514.5h0M331.5 505.3h0M332.2 500.5h0M333.0 516.3h0M333.7 509.5h0M334.4 526.6h0M335.2 538.0h0M335.9 576.2h0M336.7 541.6h0M337.4 560.0h0M338.2 553.5h0M338.9 549.9h0M339.6 523.3h0M340.4 524.2h0M341.1 546.0h0M341.9 545.1h0M342.6 547.2h0M343.3 541.6h0M344.1 563.3h0M344.8 556.5h0M345.6 512.8h0M346.3 511.0h0M347.1 488.0h0M347.8 480.8h0M348.5 480.9h0M349.3 523.9h0M350.0 533.4h0M350.8 518.1h0M351.5 511.5h0M352.3 544.5h0M353.0 548.2h0M353.7 547.8h0M354.5 546.1h0M355.2 546.1h0M356.0 560.2h0M356.7 566.4h0M357.4 563.2h0M358.2 538.4h0M358.9 548.8h0M359.7 533.1h0M360.4 554.4h0M361.2 527.2h0M361.9 529.0h0M362.6 531.7h0M363.4 509.6h0M364.1 549.1h0M364.9 570.6h0M365.6 550.8h0M366.4 560.8h0M367.1 559.6h0M367.8 505.7h0M368.6 521.3h0M369.3 525.7h0M370.1 530.6h0M370.8 513.1h0M371.5 515.3h0M372.3 518.9h0M373.0 544.5h0M373.8 544.8h0M374.5 538.5h0M375.3 560.7h0M376.0 539.3h0M376.7 529.3h0M377.5 496.2h0M378.2 534.6h0M379.0 548.8h0M379.7 555.7h0M380.4 556.4h0M381.2 546.8h0M381.9 541.7h0M382.7 529.5h0M383.4 522.3h0M384.2 521.9h0M384.9 548.0h0M385.6 548.9h0M386.4 538.5h0M387.1 523.7h0M387.9 512.0h0M388.6 544.2h0M389.4 544.0h0M390.1 536.0h0M390.8 524.0h0M391.6 503.3h0M392.3 508.4h0M393.1 528.3h0M393.8 519.3h0M394.5 515.7h0M395.3 512.1h0M396.0 516.2h0M396.8 490.1h0M397.5 498.3h0M398.3 492.5h0M399.0 520.2h0M399.7 509.2h0M400.5 526.3h0M401.2 555.2h0M402.0 541.0h0M402.7 525.7h0M403.5 529.2h0M404.2 527.9h0M404.9 509.0h0M405.7 522.5h0M406.4 559.3h0M407.2 543.6h0M407.9 534.6h0M408.6 512.3h0M409.4 521.4h0M410.1 499.8h0M410.9 489.3h0M411.6 524.9h0M412.4 509.6h0M413.1 536.0h0M413.8 560.9h0M414.6 554.3h0M415.3 555.6h0M416.1 581.5h0M416.8 559.6h0M417.5 538.9h0M418.3 513.0h0M419.0 519.8h0M419.8 549.4h0M420.5 558.9h0M421.3 531.6h0M422.0 514.2h0M422.7 509.4h0M423.5 521.7h0M424.2 519.6h0M425.0 525.7h0M425.7 531.8h0M426.5 526.1h0M427.2 527.3h0M427.9 533.7h0M428.7 532.0h0M429.4 539.5h0M430.2 567.4h0M430.9 563.1h0M431.6 552.1h0M432.4 514.4h0M433.1 526.0h0M433.9 492.1h0M434.6 479.0h0M435.4 511.2h0M436.1 528.5h0M436.8 523.9h0M437.6 492.5h0M438.3 495.7h0M439.1 491.8h0M439.8 512.6h0M440.6 554.7h0M441.3 546.2h0M442.0 524.5h0M442.8 504.5h0M443.5 510.5h0M444.3 511.2h0M445.0 494.3h0M445.7 504.0h0M446.5 488.5h0M447.2 519.4h0M448.0 539.0h0M448.7 551.8h0M449.5 531.7h0M450.2 535.5h0M450.9 525.9h0M451.7 516.2h0M452.4 512.7h0M453.2 493.0h0M453.9 477.0h0M454.6 506.7h0M455.4 507.8h0M456.1 515.2h0M456.9 532.6h0M457.6 495.7h0M458.4 488.1h0M459.1 501.5h0M459.8 513.2h0M460.6 507.9h0M461.3 528.2h0M462.8 501.8h0M463.6 490.8h0M464.3 514.5h0M465.0 522.6h0M465.8 485.8h0M466.5 519.4h0M467.3 527.6h0M468.0 546.9h0M468.7 529.7h0M469.5 519.4h0M470.2 497.5h0M471.0 548.9h0M471.7 535.2h0M472.5 557.6h0M473.2 533.8h0M473.9 533.7h0M474.7 500.6h0M475.4 501.0h0M476.2 527.0h0M476.9 504.7h0M477.7 530.8h0M478.4 536.1h0M479.1 515.2h0M479.9 512.3h0M480.6 510.3h0M481.4 516.7h0M482.1 511.4h0M482.8 504.6h0M483.6 509.9h0M484.3 501.2h0M485.1 490.8h0M485.8 505.9h0M487.3 505.8h0M488.0 517.1h0M488.8 512.2h0M489.5 503.4h0M490.3 531.0h0M491.0 524.2h0M491.7 556.4h0M492.5 536.4h0M493.2 544.8h0M494.0 540.2h0M494.7 527.6h0M495.5 542.5h0M496.2 538.9h0M496.9 549.8h0M497.7 545.7h0M498.4 525.6h0M499.2 528.9h0M499.9 534.1h0M500.7 553.5h0M501.4 532.1h0M502.1 534.4h0M502.9 505.5h0M503.6 530.1h0M504.4 515.5h0M505.1 494.4h0M505.8 510.3h0M506.6 541.1h0M507.3 514.5h0M508.1 504.8h0M508.8 504.8h0M509.6 497.9h0M510.3 518.3h0M511.0 511.0h0M511.8 508.6h0M512.5 531.2h0M513.3 522.4h0M514.0 537.1h0M514.8 520.3h0M515.5 506.0h0M516.2 485.7h0M517.0 537.1h0M517.7 531.0h0M518.5 539.2h0M519.2 538.4h0M519.9 541.1h0M520.7 539.9h0M521.4 572.3h0M522.2 541.4h0M522.9 512.6h0M523.7 503.7h0M524.4 491.7h0M525.1 520.0h0M525.9 540.2h0M526.6 521.6h0M527.4 502.4h0M528.1 507.5h0M528.8 542.8h0M529.6 491.0h0M530.3 516.9h0M531.1 505.9h0M531.8 536.5h0M532.6 518.9h0M533.3 521.8h0M534.0 500.5h0M534.8 495.2h0M535.5 533.5h0M536.3 547.7h0M537.0 536.0h0M537.8 521.1h0M538.5 492.7h0M539.2 500.7h0M540.0 511.7h0M540.7 518.9h0M541.5 521.6h0M542.2 505.6h0M542.9 513.7h0M543.7 520.6h0M544.4 548.2h0M545.2 576.1h0M545.9 558.4h0M546.7 534.8h0M547.4 533.4h0M548.1 523.2h0M548.9 514.8h0M549.6 521.2h0M550.4 507.0h0M551.1 527.9h0M551.9 528.8h0M552.6 535.5h0M553.3 532.1h0M554.1 519.9h0M554.8 508.1h0M555.6 513.6h0M556.3 512.5h0M557.0 527.0h0M557.8 532.0h0M558.5 511.4h0M559.3 523.1h0M560.0 505.3h0M560.8 506.2h0M561.5 512.7h0M562.2 484.4h0M563.0 505.6h0M563.7 520.2h0M564.5 524.1h0M565.2 521.6h0M565.9 520.2h0M566.7 508.4h0M567.4 513.2h0M568.2 510.7h0M568.9 520.2h0M569.7 503.3h0M570.4 517.9h0M571.1 525.6h0M571.9 524.0h0M572.6 516.9h0M573.4 529.5h0M574.1 498.0h0M574.9 514.8h0M575.6 522.0h0M576.3 528.8h0M577.1 534.5h0M577.8 520.5h0M578.6 518.5h0M579.3 533.4h0M580.0 538.3h0M580.8 537.8h0M581.5 506.1h0M582.3 521.1h0M583.0 541.1h0M583.8 551.3h0M584.5 544.1h0M585.2 508.7h0M586.0 529.4h0M586.7 523.6h0M587.5 477.4h0M588.2 499.1h0M589.0 479.7h0M589.7 470.6h0M590.4 476.3h0M591.2 513.8h0M591.9 509.0h0M592.7 516.7h0M593.4 546.8h0M594.1 564.1h0M594.9 545.8h0M595.6 532.6h0M596.4 507.4h0M597.1 500.0h0M597.9 515.7h0M598.6 525.3h0M599.3 526.1h0M600.1 542.9h0M600.8 522.1h0M601.6 521.2h0M602.3 535.6h0M603.0 543.4h0M603.8 556.6h0M604.5 553.2h0M605.3 540.0h0M606.0 544.4h0M606.8 522.7h0M607.5 498.9h0M608.2 522.2h0M609.0 525.6h0M609.7 534.2h0M610.5 503.6h0M611.2 506.9h0M612.0 505.4h0M612.7 499.3h0M613.4 474.5h0M614.2 486.4h0M614.9 519.2h0M615.7 531.6h0M616.4 521.5h0M617.1 525.3h0M617.9 541.9h0M618.6 489.8h0M619.4 501.1h0M620.1 520.7h0M620.9 534.8h0M621.6 562.2h0M622.3 568.9h0M623.1 558.4h0M623.8 550.4h0M624.6 552.5h0M625.3 529.7h0M626.0 523.9h0M626.8 537.0h0M627.5 564.6h0M628.3 545.3h0M629.0 533.9h0M629.8 530.9h0M630.5 547.1h0M631.2 533.3h0M632.0 550.5h0M632.7 518.8h0M633.5 512.1h0M634.2 508.6h0M635.0 524.2h0M635.7 538.8h0M636.4 503.7h0M637.2 490.5h0M637.9 503.7h0M638.7 495.5h0M639.4 475.8h0M640.1 508.2h0M640.9 518.9h0M641.6 526.2h0M642.4 514.5h0M643.1 532.7h0M643.9 521.4h0M644.6 535.8h0M645.3 509.3h0M646.1 493.5h0M646.8 501.9h0M647.6 492.2h0M648.3 510.2h0M649.1 514.1h0M649.8 495.8h0M650.5 501.9h0M651.3 498.6h0M652.0 520.5h0M652.8 507.4h0M653.5 503.3h0M654.2 529.8h0M655.0 566.0h0M655.7 574.5h0M656.5 563.9h0M657.2 552.4h0M658.0 568.5h0M658.7 550.0h0M659.4 523.3h0M660.2 525.3h0M660.9 532.9h0M661.7 515.2h0M662.4 489.6h0M663.2 476.9h0M663.9 506.1h0M664.6 500.7h0M665.4 508.6h0M666.1 521.2h0M666.9 536.6h0M667.6 530.4h0M668.3 541.5h0M669.1 524.0h0M669.8 521.9h0M670.6 509.0h0M671.3 537.9h0M672.1 535.5h0M672.8 521.2h0M673.5 517.8h0M674.3 517.1h0M675.0 531.1h0M675.8 498.8h0M676.5 486.8h0M677.2 490.2h0M678.0 545.2h0M678.7 552.9h0M679.5 538.8h0M680.2 544.2h0M681.0 570.6h0M681.7 547.1h0M682.4 529.7h0M684.7 547.4h0M685.4 527.8h0M686.2 558.2h0M686.9 575.8h0M687.6 565.3h0M688.4 559.7h0M689.1 507.1h0M689.9 520.4h0M690.6 514.7h0M691.3 523.1h0M692.1 533.7h0M692.8 524.3h0M693.6 494.3h0M694.3 511.0h0M695.1 503.9h0M695.8 506.8h0M696.5 505.4h0M697.3 508.8h0M698.0 477.3h0M698.8 520.7h0M699.5 532.2h0M700.2 555.8h0M701.0 580.1h0M701.7 571.9h0M702.5 530.6h0M703.2 519.2h0M704.0 505.5h0M704.7 508.3h0M705.4 519.2h0M706.2 490.0h0M706.9 511.5h0M707.7 492.5h0M708.4 512.0h0M709.2 517.6h0M709.9 516.3h0M710.6 520.7h0M711.4 515.7h0M712.1 512.4h0M712.9 492.8h0M713.6 508.2h0M714.3 550.5h0M715.1 580.1h0M715.8 585.8h0M716.6 579.6h0M717.3 551.3h0M718.1 569.5h0M718.8 554.5h0M719.5 543.6h0M720.3 532.8h0M721.0 531.6h0M721.8 521.7h0M722.5 521.5h0M723.3 503.7h0M724.0 503.6h0M724.7 550.8h0M725.5 540.2h0M726.2 531.7h0M727.0 540.7h0M727.7 550.2h0M729.2 523.1h0M729.9 543.1h0M730.7 544.8h0M731.4 543.7h0M732.2 568.0h0M732.9 544.8h0M733.6 544.2h0M734.4 533.4h0M735.1 562.3h0M735.9 520.3h0M736.6 516.8h0M737.3 516.9h0M738.1 537.1h0M738.8 549.7h0M739.6 573.3h0M740.3 535.8h0M741.1 553.1h0M741.8 547.1h0M742.5 536.6h0M743.3 551.6h0M744.0 537.6h0M744.8 507.2h0M745.5 517.9h0M746.3 503.8h0M747.0 510.3h0M747.7 531.0h0M748.5 542.8h0M749.2 572.0h0M750.0 559.2h0M750.7 527.2h0M751.4 520.6h0M752.2 513.2h0M752.9 503.5h0M753.7 526.3h0M754.4 521.3h0M755.2 495.4h0M755.9 524.3h0M756.6 527.4h0M757.4 538.0h0M758.1 540.4h0M758.9 550.9h0M759.6 547.3h0M760.4 566.7h0M761.1 565.6h0M761.8 564.4h0M762.6 562.6h0M763.3 528.1h0M764.1 528.0h0M764.8 524.8h0M765.5 529.6h0M766.3 505.0h0M767.0 541.1h0M767.8 538.1h0M768.5 512.2h0M769.3 487.2h0M770.0 496.5h0M770.7 506.3h0M771.5 502.6h0M772.2 515.9h0M773.0 512.2h0M773.7 532.4h0M774.5 524.1h0M775.2 530.4h0M775.9 552.4h0M776.7 580.4h0M777.4 560.5h0M778.2 547.3h0M778.9 532.6h0M779.6 551.7h0M780.4 529.3h0M781.1 526.1h0M781.9 531.7h0M782.6 518.9h0M783.4 511.3h0M784.1 515.5h0M786.3 496.2h0M787.1 515.3h0M787.8 521.9h0M788.5 500.0h0M789.3 508.6h0M790.0 535.0h0M790.8 547.0h0M791.5 544.4h0M792.3 527.8h0M793.0 543.6h0M793.7 531.9h0M794.5 513.5h0M795.2 508.7h0M796.0 544.9h0M796.7 545.1h0M797.5 560.9h0M798.2 540.8h0M798.9 552.7h0M799.7 532.4h0M800.4 526.5h0M801.2 568.5h0M801.9 564.5h0M802.6 539.1h0M803.4 529.6h0M804.1 529.9h0M804.9 545.0h0M805.6 524.7h0M806.4 488.5h0M807.1 489.9h0M807.8 496.4h0M808.6 502.4h0M809.3 528.1h0M810.1 526.7h0M810.8 534.9h0M811.5 505.9h0M812.3 522.3h0M813.0 556.0h0M813.8 554.2h0M814.5 543.9h0M815.3 535.4h0M816.0 558.4h0M816.7 526.4h0M817.5 519.4h0M818.2 524.5h0M819.0 531.9h0M819.7 514.2h0M820.5 514.6h0M821.9 507.2h0M822.7 504.1h0M823.4 483.5h0M824.2 489.7h0M824.9 511.6h0M825.6 493.2h0M826.4 494.3h0M827.1 510.4h0M827.9 491.1h0M828.6 500.7h0M829.4 484.8h0M830.1 513.3h0M830.8 553.2h0M831.6 573.5h0M832.3 547.5h0M833.1 548.8h0M833.8 538.3h0M834.6 530.7h0M835.3 550.7h0M836.0 513.0h0M836.8 530.5h0M837.5 522.1h0M838.3 542.9h0M839.0 535.2h0M839.7 513.8h0M840.5 517.7h0M841.2 527.2h0M842.0 522.0h0M842.7 528.7h0M843.5 515.7h0M844.2 478.6h0M844.9 509.6h0M845.7 526.5h0M846.4 527.3h0M847.2 526.7h0M847.9 543.1h0M848.7 527.7h0M849.4 512.9h0M850.1 513.7h0M850.9 538.7h0M851.6 508.9h0M852.4 535.9h0M853.1 521.7h0M853.8 504.3h0M854.6 535.3h0M856.1 506.7h0M856.8 507.3h0M857.6 530.9h0M858.3 550.5h0M859.0 534.0h0M859.8 538.3h0M860.5 545.2h0M861.3 525.7h0M862.0 530.2h0M862.7 527.2h0M863.5 514.6h0M864.2 507.0h0M865.0 512.7h0M865.7 515.8h0M866.5 507.7h0M867.2 504.5h0M867.9 528.6h0M868.7 528.2h0M869.4 540.3h0M870.2 554.1h0M872.4 544.5h0M873.1 549.8h0M873.9 534.0h0M874.6 561.7h0M875.4 576.7h0M876.1 521.8h0M876.8 503.3h0M877.6 520.8h0M878.3 534.5h0M879.1 543.0h0M879.8 534.8h0M880.6 538.6h0M881.3 544.5h0M882.0 536.0h0M882.8 549.8h0M883.5 501.7h0M884.3 521.2h0M885.0 504.4h0M886.5 523.5h0M887.2 509.9h0M888.0 522.3h0M888.7 507.0h0M889.5 497.8h0M890.2 480.0h0M890.9 496.4h0M891.7 515.9h0M893.2 532.9h0M893.9 549.9h0M894.7 543.4h0M895.4 534.7h0M896.1 541.1h0M896.9 552.3h0M897.6 534.7h0M898.4 525.2h0M899.1 520.2h0M899.8 521.2h0M900.6 503.8h0M901.3 526.2h0M902.1 514.6h0M902.8 523.4h0M903.6 506.7h0M904.3 518.7h0M905.0 526.7h0M905.8 518.5h0M906.5 556.9h0M907.3 552.7h0M908.0 575.0h0M908.8 576.4h0M909.5 549.4h0M910.2 537.2h0M911.0 544.9h0M911.7 543.8h0M912.5 541.4h0M913.2 535.1h0M913.9 503.4h0M914.7 511.9h0M915.4 481.4h0M916.2 507.9h0M916.9 505.9h0M917.7 504.2h0M918.4 512.0h0M919.1 525.9h0M919.9 505.6h0M920.6 487.9h0M921.4 487.2h0M922.1 469.3h0M922.8 476.1h0M924.3 510.0h0M925.1 530.8h0M925.8 507.4h0M926.6 521.0h0M927.3 517.5h0M928.0 520.4h0M928.8 532.9h0M929.5 562.3h0M930.3 553.3h0M931.0 544.8h0M931.8 518.1h0M934.0 531.4h0M934.7 522.5h0M935.5 549.6h0M936.2 500.8h0M936.9 498.6h0M938.4 506.6h0M939.9 493.4h0M940.7 474.7h0M941.4 491.3h0M942.9 553.3h0M943.6 519.2h0M945.1 495.3h0M945.9 518.5h0M946.6 501.3h0M948.1 515.0h0M948.8 529.5h0M949.6 517.8h0M950.3 497.9h0M951.0 476.2h0M951.8 478.6h0M952.5 456.7h0M953.3 489.7h0M954.0 490.8h0M954.8 512.0h0M955.5 549.7h0M956.2 561.8h0M957.0 527.7h0M958.5 558.4h0M959.2 534.7h0M960.0 516.2h0M960.7 519.7h0M961.4 496.0h0M962.2 535.0h0M962.9 490.5h0M964.4 494.3h0M965.1 501.1h0M965.9 510.9h0M966.6 520.5h0M968.1 541.8h0M968.9 497.5h0M969.6 507.2h0M971.8 521.5h0M972.6 507.1h0M974.0 524.1h0M974.8 529.9h0M975.5 515.6h0M977.0 579.0h0M977.8 537.9h0M978.5 538.3h0M979.2 577.4h0M980.0 572.7h0M980.7 558.2h0M981.5 541.2h0M982.2 524.0h0M983.0 518.9h0M983.7 509.3h0M984.4 526.2h0M985.2 515.8h0M985.9 508.7h0M986.7 491.3h0M987.4 500.4h0M988.1 492.9h0M988.9 501.9h0M990.4 534.3h0M991.1 542.1h0M991.9 546.3h0M993.3 540.9h0M994.1 535.1h0M994.8 549.6h0M995.6 525.8h0M996.3 554.6h0M997.8 532.6h0M998.5 524.9h0M1000.0 525.0h0M1000.8 513.5h0M1001.5 538.9h0M1002.2 521.5h0M1005.2 488.8h0M1006.0 522.6h0M1006.7 538.4h0M1007.4 512.9h0M1008.2 507.4h0M1008.9 547.6h0M1009.7 547.9h0M1011.1 557.4h0M1011.9 586.8h0M1012.6 587.0h0M1013.4 573.7h0M1014.1 565.4h0M1014.9 564.3h0M1015.6 542.0h0M1016.3 518.2h0M1017.1 522.5h0M1020.1 566.9h0M1023.0 543.9h0M1023.8 562.0h0M1024.5 548.5h0M1026.7 508.4h0M1028.2 539.9h0M1029.0 525.6h0M1031.9 543.1h0M1032.7 543.8h0M1033.4 516.2h0M1034.2 509.8h0M1034.9 554.4h0M1037.1 538.3h0M1037.9 535.1h0M1039.3 530.6h0M1040.8 537.2h0M1043.1 512.6h0M1043.8 514.7h0M1046.0 563.1h0M1046.8 548.5h0M1047.5 562.4h0M1048.2 575.7h0M1049.0 583.9h0M1052.7 531.5h0M1054.9 522.9h0M1055.7 496.9h0M1057.9 536.0h0M1059.4 548.8h0M1061.6 541.6h0M1062.3 539.0h0M1063.1 552.2h0M1063.8 581.1h0M1064.6 566.8h0M1065.3 531.0h0M1066.1 518.0h0M1066.8 497.9h0M1067.5 488.1h0M1069.0 532.3h0M1069.8 505.4h0M1070.5 527.2h0M1071.2 551.3h0M1072.0 538.2h0M1072.7 524.0h0M1074.2 527.9h0M1075.0 539.4h0M1075.7 556.8h0M1077.2 573.5h0M1077.9 581.1h0M1078.7 573.0h0M1079.4 528.3h0M1080.9 531.1h0M1082.4 537.7h0M1083.1 527.3h0M1083.9 509.0h0M1084.6 539.0h0M1085.3 545.0h0M1086.1 540.9h0M1086.8 550.8h0M1087.6 560.6h0M1088.3 554.2h0M1089.1 501.4h0M1089.8 499.8h0M1090.5 502.8h0M1092.0 508.7h0M1092.8 535.8h0M1093.5 523.2h0M1094.3 502.1h0M1095.0 544.4h0M1095.7 526.3h0M1096.5 501.3h0M1097.2 511.3h0M1098.0 520.6h0M1098.7 506.3h0M1099.4 523.4h0M1100.9 492.7h0M1101.7 501.6h0M1102.4 517.7h0M1103.2 500.3h0M1103.9 506.8h0M1104.6 503.7h0M1105.4 556.1h0M1106.1 521.6h0M1106.9 540.0h0M1107.6 525.4h0M1108.3 514.4h0M1109.1 524.5h0M1109.8 533.6h0M1110.6 546.7h0M1111.3 537.2h0M1112.1 512.8h0M1112.8 496.5h0M1113.5 505.3h0M1114.3 513.0h0M1115.0 533.2h0M1115.8 527.9h0M1116.5 536.6h0M1117.3 552.9h0M1118.0 537.5h0M1118.7 496.1h0M1119.5 476.0h0M1120.2 459.2h0M1121.0 504.3h0M1121.7 488.5h0M1122.4 517.9h0M1123.2 524.8h0M1123.9 549.9h0M1124.7 553.2h0M1125.4 533.9h0M1126.2 520.2h0M1126.9 517.1h0M1127.6 516.8h0M1128.4 505.4h0M1129.1 508.7h0M1129.9 541.9h0M1130.6 498.7h0M1131.4 506.8h0M1132.1 488.9h0M1132.8 499.7h0M1133.6 517.7h0M1134.3 511.9h0M1135.1 524.1h0M1135.8 488.4h0M1136.5 517.8h0M1137.3 503.8h0M1138.0 516.1h0M1138.8 515.2h0M1139.5 461.4h0M1140.3 460.4h0M1141.0 478.8h0M1141.7 516.1h0M1142.5 515.9h0M1143.2 515.5h0M1144.0 482.7h0M1144.7 514.8h0M1145.5 543.0h0M1146.2 527.2h0M1146.9 513.2h0M1147.7 477.4h0M1148.4 502.3h0M1149.2 553.0h0M1149.9 549.4h0M1150.6 558.4h0M1151.4 549.2h0M1152.1 514.9h0M1152.9 537.6h0M1153.6 505.6h0M1154.4 504.2h0M1155.1 512.5h0M1155.8 527.2h0M1156.6 529.7h0M1157.3 532.3h0M1158.1 511.7h0M1158.8 488.2h0M1159.5 497.8h0M1160.3 488.8h0M1161.0 473.6h0M1161.8 465.5h0M1162.5 476.6h0M1163.3 458.1h0M1164.0 454.8h0M1164.7 449.6h0M1165.5 479.3h0M1166.2 502.9h0M1167.0 548.4h0M1167.7 512.4h0M1168.5 504.4h0M1169.2 529.3h0M1169.9 524.6h0M1170.7 518.9h0M1171.4 553.5h0M1172.2 537.1h0M1172.9 511.2h0M1173.6 490.3h0M1174.4 507.2h0M1175.1 515.2h0M1175.9 489.0h0M1176.6 476.5h0M1177.4 497.7h0M1178.1 511.9h0M1178.8 498.2h0M1179.6 511.6h0M1180.3 518.6h0M1181.1 479.6h0M1181.8 481.4h0M1182.5 496.5h0M1183.3 489.9h0M1184.0 453.8h0M1184.8 464.2h0M1185.5 488.4h0M1186.3 520.5h0M1187.0 468.9h0M1187.7 524.5h0M1188.5 487.9h0M1189.2 503.8h0M1190.0 520.3h0M1190.7 525.8h0M1191.5 515.1h0M1192.2 484.4h0M1192.9 497.1h0M1193.7 480.1h0M1194.4 434.9h0M1195.2 506.6h0M1195.9 510.3h0M1196.6 532.5h0M1197.4 495.5h0M1198.1 517.8h0M1198.9 534.1h0M1199.6 546.1h0M1200.4 523.1h0M1201.1 487.3h0M1201.8 484.7h0M1202.6 446.3h0M1203.3 436.6h0M1204.1 453.8h0M1204.8 449.1h0M1205.6 461.5h0M1206.3 469.8h0M1207.0 516.7h0M1207.8 536.6h0M1208.5 524.5h0M1209.3 538.8h0M1210.0 511.2h0M1210.7 503.3h0M1211.5 522.6h0M1212.2 494.9h0M1213.0 494.1h0M1213.7 473.9h0M1214.5 486.7h0M1215.2 522.7h0M1215.9 501.5h0M1216.7 506.2h0M1217.4 489.2h0M1218.2 473.8h0M1218.9 464.5h0M1219.6 510.7h0M1220.4 558.7h0M1221.1 555.2h0M1221.9 529.7h0M1222.6 541.0h0M1223.4 529.3h0M1224.1 543.1h0M1224.8 541.8h0M1225.6 538.9h0M1226.3 542.8h0M1227.1 524.1h0M1227.8 514.0h0M1228.6 483.5h0M1229.3 486.5h0M1230.0 469.6h0M1230.8 483.9h0M1231.5 477.0h0M1232.3 493.2h0M1233.0 511.3h0M1233.7 487.1h0M1234.5 483.4h0M1235.2 478.3h0M1236.0 508.5h0M1236.7 547.0h0M1237.5 555.7h0M1238.2 538.9h0M1238.9 561.3h0M1239.7 519.1h0M1240.4 546.4h0M1241.2 523.4h0M1241.9 467.2h0M1242.7 534.8h0M1243.4 558.7h0M1244.1 523.9h0M1244.9 525.0h0M1245.6 517.3h0M1246.4 517.9h0M1247.1 488.3h0M1247.8 484.9h0M1248.6 505.7h0M1249.3 515.5h0M1250.1 539.6h0M1250.8 534.5h0M1251.6 573.7h0M1252.3 542.5h0M1253.0 540.1h0M1253.8 495.6h0M1254.5 480.2h0M1255.3 518.5h0M1256.0 499.2h0M1256.8 514.7h0M1257.5 513.5h0M1258.2 494.6h0M1259.0 495.2h0M1259.7 492.6h0M1260.5 491.9h0M1261.2 515.4h0M1261.9 529.0h0M1262.7 514.8h0M1263.4 500.8h0M1264.2 514.6h0M1264.9 515.4h0M1265.7 535.9h0M1266.4 574.1h0M1267.1 571.6h0M1267.9 549.1h0M1268.6 532.4h0M1269.4 508.0h0M1270.1 488.9h0M1270.8 475.2h0M1271.6 476.8h0M1272.3 475.8h0M1273.1 498.3h0M1273.8 491.7h0M1274.6 490.4h0M1275.3 470.3h0M1276.0 511.8h0M1276.8 518.0h0M1277.5 547.7h0M1278.3 550.5h0M1279.0 566.4h0M1279.8 544.0h0M1280.5 547.6h0M1281.2 584.3h0M1282.0 538.9h0M1282.7 551.2h0M1283.5 568.8h0M1284.2 556.2h0M1284.9 555.4h0M1285.7 564.4h0M1286.4 533.1h0M1287.9 510.8h0M1288.7 498.2h0M1289.4 493.7h0M1290.1 500.2h0M1290.9 511.0h0M1291.6 524.2h0M1292.4 496.8h0M1293.1 546.7h0M1293.8 563.1h0M1294.6 564.5h0M1295.3 546.0h0M1296.1 540.2h0M1296.8 548.2h0M1297.6 551.4h0M1298.3 512.5h0M1299.0 534.1h0M1299.8 589.0h0M1300.5 531.4h0M1301.3 548.8h0M1302.0 549.1h0M1302.8 539.5h0" stroke="#000" stroke-width="3.70" stroke-linecap="round" fill="none"/>
<path d="M462.4 456.3h0M728.2 600.4h0M784.9 603.7h0M785.8 603.3h0M892.4 638.4h0M932.2 590.4h0M947.5 596.5h0M933.4 634.2h0M947.5 641.2h0M957.4 630.3h0M939.3 431.3h0M944.7 447.3h0M940.3 448.5h0M941.8 455.7h0M937.4 463.3h0M967.5 592.5h0M976.5 595.5h0M971.5 613.5h0M989.5 604.5h0M999.5 603.5h0M1004.5 634.5h0M1010.5 627.5h0M1020.5 616.5h0M1030.5 592.5h0M1031.5 625.5h0M1042.5 635.5h0M1044.5 625.5h0M1045.5 608.5h0M1052.5 602.5h0M1057.5 618.5h0M1040.5 653.5h0M1049.5 660.0h0M1056.5 645.5h0M1068.5 640.5h0M1081.5 649.5h0M1073.5 598.5h0M1076.5 598.5h0M1100.5 428.3h0M1287.2 602.3h0" stroke="#ffa500" stroke-width="3.30" stroke-linecap="round" fill="none"/>
</g>
<rect x="105.5" y="499.1" width="1255.1" height="48.7" fill="#ff0000" fill-opacity="0.12"/>
<rect x="162.3" y="501.0" width="936.9" height="51.4" fill="#ffa500" fill-opacity="0.13"/>
<rect x="1099.2" y="484.0" width="205.8" height="63.8" fill="#ffa500" fill-opacity="0.13"/>
<line x1="105.5" y1="523.0" x2="1360.6" y2="523.0" stroke="#ff0000" stroke-width="2.1"/>
<line x1="162.3" y1="526.5" x2="1099.2" y2="526.5" stroke="#ffa500" stroke-width="2.8"/>
<line x1="1099.2" y1="515.4" x2="1305.0" y2="515.4" stroke="#ffa500" stroke-width="2.8"/>
<line x1="162.3" y1="666.5" x2="162.3" y2="380.5" stroke="#800080" stroke-width="2.08" stroke-dasharray="2.08 3.44"/>
<line x1="1099.2" y1="666.5" x2="1099.2" y2="380.5" stroke="#800080" stroke-width="2.08" stroke-dasharray="2.08 3.44"/>
<line x1="1303.3" y1="666.5" x2="1303.3" y2="380.5" stroke="#800080" stroke-width="2.08" stroke-dasharray="2.08 3.44"/>
<path d="M483.6 660.7L489.2 660.7L486.4 665.5ZM680.8 660.7L686.4 660.7L683.6 665.5ZM818.5 660.7L824.1 660.7L821.3 665.5ZM852.7 660.7L858.3 660.7L855.5 665.5ZM868.4 660.7L874.0 660.7L871.2 665.5ZM882.6 660.7L888.2 660.7L885.4 665.5ZM920.5 660.7L926.1 660.7L923.3 665.5ZM960.7 660.7L966.3 660.7L963.5 665.5ZM967.2 660.7L972.8 660.7L970.0 665.5ZM970.7 660.7L976.3 660.7L973.5 665.5ZM989.7 660.7L995.3 660.7L992.5 665.5ZM994.2 660.7L999.8 660.7L997.0 665.5ZM1001.2 660.7L1006.8 660.7L1004.0 665.5ZM1015.2 660.7L1020.8 660.7L1018.0 665.5ZM1019.2 660.7L1024.8 660.7L1022.0 665.5ZM1023.2 660.7L1028.8 660.7L1026.0 665.5ZM1027.2 660.7L1032.8 660.7L1030.0 665.5ZM1033.2 660.7L1038.8 660.7L1036.0 665.5ZM1037.2 660.7L1042.8 660.7L1040.0 665.5ZM1039.2 660.7L1044.8 660.7L1042.0 665.5ZM1048.2 660.7L1053.8 660.7L1051.0 665.5ZM1051.2 660.7L1056.8 660.7L1054.0 665.5ZM1056.2 660.7L1061.8 660.7L1059.0 665.5ZM1058.2 660.7L1063.8 660.7L1061.0 665.5ZM1077.7 660.7L1083.3 660.7L1080.5 665.5ZM1088.7 660.7L1094.3 660.7L1091.5 665.5Z" fill="#ffa500"/>
<text x="630.5" y="656.5" font-size="14.17" text-anchor="middle" textLength="43.9" lengthAdjust="spacingAndGlyphs">54462</text>
<text x="1201.1" y="636.5" font-size="14.17" text-anchor="middle" textLength="44.0" lengthAdjust="spacingAndGlyphs">49059</text>
<rect x="105.5" y="380.5" width="1380.0" height="286.0" fill="none" stroke="#000" stroke-width="1.0" shape-rendering="crispEdges"/>
<line x1="162.5" y1="666.5" x2="162.5" y2="671.4" stroke="#000" stroke-width="1.1"/>
<text x="162.5" y="687.1" font-size="14.17" text-anchor="middle" textLength="8.8" lengthAdjust="spacingAndGlyphs">0</text>
<line x1="347.5" y1="666.5" x2="347.5" y2="671.4" stroke="#000" stroke-width="1.1"/>
<text x="347.5" y="687.1" font-size="14.17" text-anchor="middle" textLength="26.2" lengthAdjust="spacingAndGlyphs">250</text>
<line x1="533.5" y1="666.5" x2="533.5" y2="671.4" stroke="#000" stroke-width="1.1"/>
<text x="533.5" y="687.1" font-size="14.17" text-anchor="middle" textLength="26.2" lengthAdjust="spacingAndGlyphs">500</text>
<line x1="718.5" y1="666.5" x2="718.5" y2="671.4" stroke="#000" stroke-width="1.1"/>
<text x="718.5" y="687.1" font-size="14.17" text-anchor="middle" textLength="26.2" lengthAdjust="spacingAndGlyphs">750</text>
<line x1="904.5" y1="666.5" x2="904.5" y2="671.4" stroke="#000" stroke-width="1.1"/>
<text x="904.5" y="687.1" font-size="14.17" text-anchor="middle" textLength="35.1" lengthAdjust="spacingAndGlyphs">1000</text>
<line x1="1089.5" y1="666.5" x2="1089.5" y2="671.4" stroke="#000" stroke-width="1.1"/>
<text x="1089.5" y="687.1" font-size="14.17" text-anchor="middle" textLength="35.1" lengthAdjust="spacingAndGlyphs">1250</text>
<line x1="1275.5" y1="666.5" x2="1275.5" y2="671.4" stroke="#000" stroke-width="1.1"/>
<text x="1275.5" y="687.1" font-size="14.17" text-anchor="middle" textLength="35.1" lengthAdjust="spacingAndGlyphs">1500</text>
<line x1="1460.5" y1="666.5" x2="1460.5" y2="671.4" stroke="#000" stroke-width="1.1"/>
<text x="1460.5" y="687.1" font-size="14.17" text-anchor="middle" textLength="35.1" lengthAdjust="spacingAndGlyphs">1750</text>
<line x1="100.6" y1="646.5" x2="105.5" y2="646.5" stroke="#000" stroke-width="1.0" shape-rendering="crispEdges"/>
<text x="95.1" y="651.5" font-size="14.17" text-anchor="end" textLength="39.5" lengthAdjust="spacingAndGlyphs">6.475</text>
<line x1="100.6" y1="613.5" x2="105.5" y2="613.5" stroke="#000" stroke-width="1.0" shape-rendering="crispEdges"/>
<text x="95.1" y="618.5" font-size="14.17" text-anchor="end" textLength="39.6" lengthAdjust="spacingAndGlyphs">6.480</text>
<line x1="100.6" y1="581.5" x2="105.5" y2="581.5" stroke="#000" stroke-width="1.0" shape-rendering="crispEdges"/>
<text x="95.1" y="586.5" font-size="14.17" text-anchor="end" textLength="39.6" lengthAdjust="spacingAndGlyphs">6.485</text>
<line x1="100.6" y1="548.5" x2="105.5" y2="548.5" stroke="#000" stroke-width="1.0" shape-rendering="crispEdges"/>
<text x="95.1" y="553.5" font-size="14.17" text-anchor="end" textLength="39.6" lengthAdjust="spacingAndGlyphs">6.490</text>
<line x1="100.6" y1="515.5" x2="105.5" y2="515.5" stroke="#000" stroke-width="1.0" shape-rendering="crispEdges"/>
<text x="95.1" y="520.5" font-size="14.17" text-anchor="end" textLength="39.6" lengthAdjust="spacingAndGlyphs">6.495</text>
<line x1="100.6" y1="482.5" x2="105.5" y2="482.5" stroke="#000" stroke-width="1.0" shape-rendering="crispEdges"/>
<text x="95.1" y="487.5" font-size="14.17" text-anchor="end" textLength="39.5" lengthAdjust="spacingAndGlyphs">6.500</text>
<line x1="100.6" y1="450.5" x2="105.5" y2="450.5" stroke="#000" stroke-width="1.0" shape-rendering="crispEdges"/>
<text x="95.1" y="455.5" font-size="14.17" text-anchor="end" textLength="39.5" lengthAdjust="spacingAndGlyphs">6.505</text>
<line x1="100.6" y1="417.5" x2="105.5" y2="417.5" stroke="#000" stroke-width="1.0" shape-rendering="crispEdges"/>
<text x="95.1" y="422.5" font-size="14.17" text-anchor="end" textLength="39.6" lengthAdjust="spacingAndGlyphs">6.510</text>
<line x1="100.6" y1="384.5" x2="105.5" y2="384.5" stroke="#000" stroke-width="1.0" shape-rendering="crispEdges"/>
<text x="95.1" y="389.5" font-size="14.17" text-anchor="end" textLength="39.6" lengthAdjust="spacingAndGlyphs">6.515</text>
<rect x="1365.4" y="387.7" width="112.8" height="47.3" rx="2.8" fill="#fff" fill-opacity="0.8" stroke="#d5d5d5" stroke-width="1.1"/>
<line x1="1369.5" y1="398.9" x2="1400" y2="398.9" stroke="#ffa500" stroke-width="2.8"/>
<line x1="1369" y1="421.8" x2="1399" y2="421.8" stroke="#ff0000" stroke-width="2.1"/>
<text x="1410.3" y="403.7" font-size="14.17" text-anchor="start" textLength="31.0" lengthAdjust="spacingAndGlyphs">mag</text>
<text x="1439.0" y="406.0" font-size="10.48" text-anchor="start" textLength="32.5" lengthAdjust="spacingAndGlyphs" font-style="italic">OBSID</text>
<text x="1409.5" y="426.5" font-size="14.17" text-anchor="start" textLength="31.0" lengthAdjust="spacingAndGlyphs">mag</text>
<rect x="1348.5" y="613.5" width="130.0" height="46.0" rx="2.8" fill="#fff" fill-opacity="0.8" stroke="#d5d5d5" stroke-width="1.1"/>
<circle cx="1367.5" cy="626.5" r="1.85" fill="#ffa500"/>
<circle cx="1367.5" cy="647.5" r="1.95" fill="#000"/>
<text x="1393.3" y="629.8" font-size="14.17" text-anchor="start" textLength="80.1" lengthAdjust="spacingAndGlyphs">Highlighted</text>
<text x="1393.3" y="650.8" font-size="14.17" text-anchor="start" textLength="19.9" lengthAdjust="spacingAndGlyphs">OK</text>
<line x1="105.5" y1="758.5" x2="1485.5" y2="758.5" stroke="#b0b0b0" stroke-width="1.11" stroke-dasharray="1.11 1.83"/>
<line x1="105.5" y1="791.2" x2="1485.5" y2="791.2" stroke="#b0b0b0" stroke-width="1.11" stroke-dasharray="1.11 1.83"/>
<line x1="105.5" y1="823.2" x2="1485.5" y2="823.2" stroke="#b0b0b0" stroke-width="1.11" stroke-dasharray="1.11 1.83"/>
<line x1="105.5" y1="856.0" x2="1485.5" y2="856.0" stroke="#b0b0b0" stroke-width="1.11" stroke-dasharray="1.11 1.83"/>
<line x1="105.5" y1="889.1" x2="1485.5" y2="889.1" stroke="#b0b0b0" stroke-width="1.11" stroke-dasharray="1.11 1.83"/>
<line x1="105.5" y1="921.3" x2="1485.5" y2="921.3" stroke="#b0b0b0" stroke-width="1.11" stroke-dasharray="1.11 1.83"/>
<line x1="162.3" y1="954.5" x2="162.3" y2="725.5" stroke="#800080" stroke-width="2.08" stroke-dasharray="2.08 3.44"/>
<line x1="1099.2" y1="954.5" x2="1099.2" y2="725.5" stroke="#800080" stroke-width="2.08" stroke-dasharray="2.08 3.44"/>
<line x1="1303.3" y1="954.5" x2="1303.3" y2="725.5" stroke="#800080" stroke-width="2.08" stroke-dasharray="2.08 3.44"/>
<path d="M716 856.4L718.8 854.4L718.8 858.4Z M716 889.3L718.8 887.3L718.8 891.3Z" fill="#000"/>
<rect x="105.5" y="725.5" width="1380.0" height="229.0" fill="none" stroke="#000" stroke-width="1.0" shape-rendering="crispEdges"/>
<line x1="100.6" y1="758.5" x2="105.5" y2="758.5" stroke="#000" stroke-width="1.1"/>
<text x="95.8" y="763.5" font-size="14.17" text-anchor="end" textLength="79.2" lengthAdjust="spacingAndGlyphs">not Kalman</text>
<line x1="100.6" y1="791.2" x2="105.5" y2="791.2" stroke="#000" stroke-width="1.1"/>
<text x="95.8" y="796.2" font-size="14.17" text-anchor="end" textLength="62.8" lengthAdjust="spacingAndGlyphs">not track</text>
<line x1="100.6" y1="823.2" x2="105.5" y2="823.2" stroke="#000" stroke-width="1.1"/>
<text x="95.8" y="828.2" font-size="14.17" text-anchor="end" textLength="69.0" lengthAdjust="spacingAndGlyphs">Sat. pixel.</text>
<line x1="100.6" y1="856.0" x2="105.5" y2="856.0" stroke="#000" stroke-width="1.1"/>
<text x="95.8" y="861.0" font-size="14.17" text-anchor="end" textLength="57.6" lengthAdjust="spacingAndGlyphs">Ion. rad.</text>
<line x1="100.6" y1="889.1" x2="105.5" y2="889.1" stroke="#000" stroke-width="1.1"/>
<text x="95.8" y="894.1" font-size="14.17" text-anchor="end" textLength="43.8" lengthAdjust="spacingAndGlyphs">dr &gt; 5</text>
<line x1="100.6" y1="921.3" x2="105.5" y2="921.3" stroke="#000" stroke-width="1.1"/>
<text x="95.8" y="926.3" font-size="14.17" text-anchor="end" textLength="80.4" lengthAdjust="spacingAndGlyphs">OBS not OK</text>
<line x1="105.5" y1="1009.5" x2="1485.5" y2="1009.5" stroke="#b0b0b0" stroke-width="1.11" stroke-dasharray="1.11 1.83"/>
<line x1="105.5" y1="983.5" x2="1485.5" y2="983.5" stroke="#b0b0b0" stroke-width="1.11" stroke-dasharray="1.11 1.83"/>
<line x1="105.5" y1="957.4" x2="1485.5" y2="957.4" stroke="#b0b0b0" stroke-width="1.11" stroke-dasharray="1.11 1.83"/>
<line x1="162.3" y1="1011.5" x2="162.3" y2="954.5" stroke="#800080" stroke-width="2.08" stroke-dasharray="2.08 3.44"/>
<line x1="1099.2" y1="1011.5" x2="1099.2" y2="954.5" stroke="#800080" stroke-width="2.08" stroke-dasharray="2.08 3.44"/>
<line x1="1303.3" y1="1011.5" x2="1303.3" y2="954.5" stroke="#800080" stroke-width="2.08" stroke-dasharray="2.08 3.44"/>
<path d="M162.3 1008.6h0M163.0 1007.8h0M163.8 1008.3h0M164.5 1008.7h0M165.3 1008.1h0M166.0 1008.1h0M166.8 1008.2h0M167.5 1008.1h0M168.2 1008.7h0M169.0 1007.9h0M169.7 1008.5h0M170.5 1007.8h0M171.2 1008.4h0M171.9 1008.2h0M172.7 1007.4h0M173.4 1008.2h0M174.2 1007.9h0M174.9 1008.1h0M175.7 1008.7h0M176.4 1007.9h0M177.1 1007.9h0M177.9 1008.6h0M178.6 1008.2h0M179.4 1008.7h0M180.1 1008.3h0M180.9 1007.9h0M181.6 1008.2h0M182.3 1008.6h0M183.1 1008.5h0M183.8 1008.2h0M184.6 1008.2h0M185.3 1008.2h0M186.0 1008.0h0M186.8 1008.7h0M187.5 1008.1h0M188.3 1007.7h0M189.0 1007.9h0M189.8 1008.2h0M190.5 1008.2h0M191.2 1007.9h0M192.0 1007.7h0M192.7 1007.9h0M193.5 1007.3h0M194.2 1007.4h0M194.9 1008.0h0M195.7 1007.6h0M196.4 1007.9h0M197.2 1008.1h0M197.9 1007.9h0M198.7 1007.7h0M199.4 1008.3h0M200.1 1007.8h0M200.9 1007.5h0M201.6 1007.8h0M202.4 1007.7h0M203.1 1007.3h0M203.9 1007.6h0M204.6 1007.5h0M205.3 1007.0h0M206.1 1007.5h0M206.8 1007.5h0M207.6 1007.5h0M208.3 1007.1h0M209.0 1007.5h0M209.8 1007.6h0M210.5 1007.6h0M211.3 1007.2h0M212.0 1007.8h0M212.8 1007.2h0M213.5 1007.5h0M214.2 1008.0h0M215.0 1007.4h0M215.7 1007.5h0M216.5 1008.0h0M217.2 1007.5h0M218.0 1007.6h0M218.7 1007.8h0M219.4 1008.1h0M220.2 1007.1h0M220.9 1007.5h0M221.7 1007.5h0M222.4 1007.5h0M223.1 1007.6h0M223.9 1007.6h0M224.6 1008.0h0M225.4 1007.6h0M226.1 1008.0h0M226.9 1008.1h0M227.6 1007.8h0M228.3 1008.0h0M229.1 1008.5h0M229.8 1008.1h0M230.6 1007.9h0M231.3 1008.1h0M232.0 1007.8h0M232.8 1008.2h0M233.5 1008.4h0M234.3 1007.9h0M235.0 1008.1h0M235.8 1008.5h0M236.5 1008.0h0M237.2 1008.3h0M238.0 1007.9h0M238.7 1007.9h0M239.5 1008.0h0M240.2 1008.9h0M241.0 1008.1h0M241.7 1008.0h0M242.4 1008.0h0M243.2 1008.2h0M243.9 1008.4h0M244.7 1008.3h0M245.4 1008.8h0M246.1 1008.3h0M246.9 1008.6h0M247.6 1008.3h0M248.4 1008.4h0M249.1 1007.8h0M249.9 1008.2h0M250.6 1008.2h0M251.3 1008.1h0M252.1 1007.6h0M252.8 1008.5h0M253.6 1008.1h0M254.3 1008.1h0M255.1 1008.1h0M255.8 1008.1h0M256.5 1008.3h0M257.3 1007.8h0M258.0 1007.9h0M258.8 1008.3h0M259.5 1008.2h0M260.2 1008.1h0M261.0 1008.0h0M261.7 1007.9h0M262.5 1008.2h0M263.2 1008.6h0M264.0 1007.9h0M264.7 1008.7h0M265.4 1008.5h0M266.2 1008.1h0M266.9 1008.4h0M267.7 1007.8h0M268.4 1007.7h0M269.1 1007.8h0M269.9 1008.1h0M270.6 1008.1h0M271.4 1008.0h0M272.1 1008.2h0M272.9 1007.6h0M273.6 1008.3h0M274.3 1007.8h0M275.1 1008.0h0M275.8 1008.1h0M276.6 1007.9h0M277.3 1007.8h0M278.1 1007.9h0M278.8 1008.2h0M279.5 1008.4h0M280.3 1008.4h0M281.0 1007.9h0M281.8 1008.0h0M282.5 1007.9h0M283.2 1008.3h0M284.0 1007.6h0M284.7 1008.6h0M285.5 1008.1h0M286.2 1008.0h0M287.0 1008.3h0M287.7 1008.5h0M288.4 1008.3h0M289.2 1008.5h0M289.9 1008.2h0M290.7 1008.6h0M291.4 1008.6h0M292.1 1008.2h0M292.9 1008.6h0M293.6 1008.2h0M294.4 1008.2h0M295.1 1007.9h0M295.9 1008.1h0M296.6 1008.4h0M297.3 1007.8h0M298.1 1008.4h0M298.8 1008.3h0M299.6 1008.3h0M300.3 1007.5h0M301.1 1008.2h0M301.8 1008.4h0M302.5 1008.0h0M303.3 1008.2h0M304.0 1007.5h0M304.8 1008.4h0M305.5 1008.0h0M306.2 1008.5h0M307.0 1007.6h0M307.7 1008.4h0M308.5 1008.1h0M309.2 1008.4h0M310.0 1007.9h0M310.7 1008.0h0M311.4 1008.9h0M312.2 1008.0h0M312.9 1008.0h0M313.7 1008.1h0M314.4 1007.9h0M315.2 1008.6h0M315.9 1008.7h0M316.6 1008.0h0M317.4 1007.7h0M318.1 1008.6h0M318.9 1008.5h0M319.6 1008.4h0M320.3 1008.5h0M321.1 1007.9h0M321.8 1008.1h0M322.6 1007.8h0M323.3 1007.8h0M324.1 1008.5h0M324.8 1008.0h0M325.5 1008.9h0M326.3 1008.2h0M327.0 1008.0h0M327.8 1008.4h0M328.5 1008.7h0M329.2 1008.3h0M330.0 1007.8h0M330.7 1008.3h0M331.5 1008.6h0M332.2 1008.1h0M333.0 1008.0h0M333.7 1008.5h0M334.4 1008.2h0M335.2 1007.9h0M335.9 1008.1h0M336.7 1008.0h0M337.4 1008.3h0M338.2 1008.2h0M338.9 1008.5h0M339.6 1008.4h0M340.4 1007.7h0M341.1 1008.3h0M341.9 1008.5h0M342.6 1008.3h0M343.3 1008.5h0M344.1 1008.0h0M344.8 1007.9h0M345.6 1008.5h0M346.3 1007.9h0M347.1 1007.6h0M347.8 1008.5h0M348.5 1008.0h0M349.3 1008.1h0M350.0 1007.8h0M350.8 1007.8h0M351.5 1007.9h0M352.3 1008.1h0M353.0 1008.3h0M353.7 1007.5h0M354.5 1008.4h0M355.2 1007.8h0M356.0 1007.9h0M356.7 1008.4h0M357.4 1008.2h0M358.2 1007.7h0M358.9 1008.8h0M359.7 1007.9h0M360.4 1008.3h0M361.2 1008.3h0M361.9 1008.6h0M362.6 1008.1h0M363.4 1008.5h0M364.1 1008.0h0M364.9 1008.5h0M365.6 1008.0h0M366.4 1008.1h0M367.1 1008.8h0M367.8 1008.3h0M368.6 1008.2h0M369.3 1008.9h0M370.1 1008.3h0M370.8 1008.0h0M371.5 1008.4h0M372.3 1007.8h0M373.0 1008.5h0M373.8 1008.6h0M374.5 1008.0h0M375.3 1008.0h0M376.0 1008.3h0M376.7 1008.2h0M377.5 1007.9h0M378.2 1008.4h0M379.0 1007.6h0M379.7 1008.1h0M380.4 1008.1h0M381.2 1008.1h0M381.9 1008.3h0M382.7 1007.8h0M383.4 1008.4h0M384.2 1008.1h0M384.9 1008.0h0M385.6 1007.8h0M386.4 1007.8h0M387.1 1008.3h0M387.9 1007.9h0M388.6 1008.2h0M389.4 1008.5h0M390.1 1008.5h0M390.8 1008.7h0M391.6 1008.1h0M392.3 1007.9h0M393.1 1008.5h0M393.8 1008.3h0M394.5 1008.5h0M395.3 1008.2h0M396.0 1008.6h0M396.8 1008.5h0M397.5 1008.4h0M398.3 1008.4h0M399.0 1008.3h0M399.7 1008.3h0M400.5 1008.3h0M401.2 1008.5h0M402.0 1008.0h0M402.7 1008.7h0M403.5 1008.2h0M404.2 1008.5h0M404.9 1008.2h0M405.7 1008.1h0M406.4 1008.8h0M407.2 1008.1h0M407.9 1007.8h0M408.6 1008.0h0M409.4 1008.1h0M410.1 1008.8h0M410.9 1008.3h0M411.6 1008.5h0M412.4 1007.9h0M413.1 1008.3h0M413.8 1008.4h0M414.6 1008.7h0M415.3 1008.0h0M416.1 1008.4h0M416.8 1008.3h0M417.5 1007.9h0M418.3 1008.2h0M419.0 1008.1h0M419.8 1007.5h0M420.5 1008.4h0M421.3 1008.4h0M422.0 1008.1h0M422.7 1007.8h0M423.5 1008.6h0M424.2 1008.3h0M425.0 1008.5h0M425.7 1008.6h0M426.5 1008.0h0M427.2 1008.4h0M427.9 1008.1h0M428.7 1008.2h0M429.4 1008.2h0M430.2 1008.2h0M430.9 1008.5h0M431.6 1008.2h0M432.4 1008.2h0M433.1 1008.1h0M433.9 1008.3h0M434.6 1007.9h0M435.4 1008.0h0M436.1 1008.2h0M436.8 1008.0h0M437.6 1008.2h0M438.3 1008.0h0M439.1 1008.8h0M439.8 1008.6h0M440.6 1008.3h0M441.3 1008.2h0M442.0 1008.9h0M442.8 1008.3h0M443.5 1008.2h0M444.3 1008.3h0M445.0 1008.3h0M445.7 1008.6h0M446.5 1008.2h0M447.2 1008.8h0M448.0 1007.9h0M448.7 1008.4h0M449.5 1007.9h0M450.2 1008.7h0M450.9 1008.1h0M451.7 1008.2h0M452.4 1008.5h0M453.2 1008.6h0M453.9 1007.9h0M454.6 1008.1h0M455.4 1007.8h0M456.1 1008.2h0M456.9 1008.2h0M457.6 1008.1h0M458.4 1008.0h0M459.1 1008.1h0M459.8 1008.0h0M460.6 1008.4h0M461.3 1008.7h0M462.1 1007.6h0M462.8 1008.2h0M463.6 1008.1h0M464.3 1008.3h0M465.0 1007.9h0M465.8 1008.2h0M466.5 1007.9h0M467.3 1008.4h0M468.0 1008.2h0M468.7 1008.2h0M469.5 1008.3h0M470.2 1008.1h0M471.0 1007.7h0M471.7 1008.4h0M472.5 1008.3h0M473.2 1008.2h0M473.9 1008.5h0M474.7 1008.6h0M475.4 1007.9h0M476.2 1008.0h0M476.9 1008.7h0M477.7 1008.6h0M478.4 1008.0h0M479.1 1007.8h0M479.9 1008.0h0M480.6 1008.1h0M481.4 1007.7h0M482.1 1008.2h0M482.8 1007.8h0M483.6 1007.8h0M484.3 1008.5h0M485.1 1008.0h0M485.8 1008.2h0M486.6 1008.4h0M487.3 1008.4h0M488.0 1008.1h0M488.8 1008.2h0M489.5 1008.0h0M490.3 1008.7h0M491.0 1008.4h0M491.7 1007.9h0M492.5 1008.2h0M493.2 1008.4h0M494.0 1008.3h0M494.7 1008.7h0M495.5 1008.6h0M496.2 1008.0h0M496.9 1008.2h0M497.7 1007.8h0M498.4 1008.3h0M499.2 1008.2h0M499.9 1009.0h0M500.7 1008.2h0M501.4 1007.6h0M502.1 1008.0h0M502.9 1008.2h0M503.6 1007.8h0M504.4 1007.9h0M505.1 1008.1h0M505.8 1008.3h0M506.6 1008.2h0M507.3 1007.9h0M508.1 1008.4h0M508.8 1008.0h0M509.6 1008.1h0M510.3 1007.8h0M511.0 1008.0h0M511.8 1008.4h0M512.5 1007.7h0M513.3 1008.2h0M514.0 1008.4h0M514.8 1008.1h0M515.5 1008.3h0M516.2 1007.9h0M517.0 1008.6h0M517.7 1008.5h0M518.5 1008.3h0M519.2 1007.7h0M519.9 1007.9h0M520.7 1008.5h0M521.4 1008.7h0M522.2 1008.3h0M522.9 1008.6h0M523.7 1008.0h0M524.4 1008.1h0M525.1 1008.2h0M525.9 1008.3h0M526.6 1007.7h0M527.4 1008.5h0M528.1 1008.6h0M528.8 1007.9h0M529.6 1007.8h0M530.3 1008.3h0M531.1 1008.0h0M531.8 1007.5h0M532.6 1008.4h0M533.3 1008.2h0M534.0 1008.1h0M534.8 1008.8h0M535.5 1008.2h0M536.3 1008.0h0M537.0 1008.2h0M537.8 1007.9h0M538.5 1008.0h0M539.2 1008.3h0M540.0 1008.0h0M540.7 1008.1h0M541.5 1008.7h0M542.2 1008.5h0M542.9 1008.4h0M543.7 1008.4h0M544.4 1008.3h0M545.2 1008.6h0M545.9 1008.2h0M546.7 1008.8h0M547.4 1007.9h0M548.1 1008.1h0M548.9 1007.8h0M549.6 1008.1h0M550.4 1008.4h0M551.1 1008.6h0M551.9 1008.0h0M552.6 1008.2h0M553.3 1008.1h0M554.1 1008.0h0M554.8 1007.8h0M555.6 1008.2h0M556.3 1007.7h0M557.0 1008.2h0M557.8 1008.2h0M558.5 1008.0h0M559.3 1007.9h0M560.0 1007.8h0M560.8 1008.8h0M561.5 1007.8h0M562.2 1008.7h0M563.0 1008.4h0M563.7 1008.1h0M564.5 1007.9h0M565.2 1008.5h0M565.9 1008.7h0M566.7 1007.9h0M567.4 1008.1h0M568.2 1008.5h0M568.9 1008.3h0M569.7 1008.8h0M570.4 1008.0h0M571.1 1008.4h0M571.9 1007.8h0M572.6 1008.8h0M573.4 1008.0h0M574.1 1007.5h0M574.9 1008.2h0M575.6 1008.2h0M576.3 1008.8h0M577.1 1008.1h0M577.8 1008.2h0M578.6 1008.4h0M579.3 1008.7h0M580.0 1008.2h0M580.8 1008.5h0M581.5 1008.4h0M582.3 1008.1h0M583.0 1008.2h0M583.8 1008.2h0M584.5 1007.9h0M585.2 1008.6h0M586.0 1007.8h0M586.7 1008.6h0M587.5 1008.5h0M588.2 1008.2h0M589.0 1008.0h0M589.7 1008.1h0M590.4 1008.3h0M591.2 1008.4h0M591.9 1008.3h0M592.7 1008.5h0M593.4 1008.0h0M594.1 1008.3h0M594.9 1007.7h0M595.6 1008.4h0M596.4 1008.2h0M597.1 1008.1h0M597.9 1008.5h0M598.6 1008.4h0M599.3 1007.4h0M600.1 1008.2h0M600.8 1007.8h0M601.6 1008.5h0M602.3 1008.9h0M603.0 1008.0h0M603.8 1008.2h0M604.5 1008.1h0M605.3 1008.3h0M606.0 1008.4h0M606.8 1008.6h0M607.5 1007.9h0M608.2 1008.7h0M609.0 1007.9h0M609.7 1008.3h0M610.5 1008.5h0M611.2 1008.4h0M612.0 1007.9h0M612.7 1008.0h0M613.4 1008.1h0M614.2 1008.2h0M614.9 1008.5h0M615.7 1007.8h0M616.4 1008.3h0M617.1 1008.4h0M617.9 1008.4h0M618.6 1008.3h0M619.4 1008.7h0M620.1 1008.3h0M620.9 1008.5h0M621.6 1008.4h0M622.3 1008.7h0M623.1 1007.6h0M623.8 1008.6h0M624.6 1008.1h0M625.3 1008.1h0M626.0 1007.9h0M626.8 1007.6h0M627.5 1008.1h0M628.3 1008.0h0M629.0 1008.3h0M629.8 1007.8h0M630.5 1008.6h0M631.2 1008.3h0M632.0 1008.1h0M632.7 1008.0h0M633.5 1008.0h0M634.2 1007.9h0M635.0 1008.0h0M635.7 1008.2h0M636.4 1008.1h0M637.2 1007.8h0M637.9 1008.1h0M638.7 1007.9h0M639.4 1008.2h0M640.1 1008.8h0M640.9 1008.4h0M641.6 1008.1h0M642.4 1007.7h0M643.1 1007.8h0M643.9 1007.7h0M644.6 1008.4h0M645.3 1008.0h0M646.1 1008.2h0M646.8 1008.0h0M647.6 1008.2h0M648.3 1008.6h0M649.1 1008.0h0M649.8 1008.1h0M650.5 1008.0h0M651.3 1008.5h0M652.0 1007.9h0M652.8 1007.9h0M653.5 1007.8h0M654.2 1007.8h0M655.0 1008.3h0M655.7 1009.0h0M656.5 1007.9h0M657.2 1008.5h0M658.0 1008.3h0M658.7 1007.9h0M659.4 1008.1h0M660.2 1008.1h0M660.9 1008.0h0M661.7 1008.8h0M662.4 1007.6h0M663.2 1008.3h0M663.9 1008.3h0M664.6 1008.0h0M665.4 1008.2h0M666.1 1008.5h0M666.9 1008.2h0M667.6 1008.3h0M668.3 1008.4h0M669.1 1007.6h0M669.8 1008.6h0M670.6 1008.9h0M671.3 1008.5h0M672.1 1008.5h0M672.8 1007.8h0M673.5 1008.2h0M674.3 1008.0h0M675.0 1008.0h0M675.8 1008.5h0M676.5 1008.0h0M677.2 1008.2h0M678.0 1007.6h0M678.7 1008.2h0M679.5 1008.2h0M680.2 1008.0h0M681.0 1008.0h0M681.7 1008.8h0M682.4 1007.8h0M683.2 1007.9h0M683.9 1008.0h0M684.7 1008.6h0M685.4 1008.8h0M686.2 1008.3h0M686.9 1008.0h0M687.6 1008.1h0M688.4 1008.5h0M689.1 1007.9h0M689.9 1008.6h0M690.6 1008.6h0M691.3 1008.2h0M692.1 1008.4h0M692.8 1008.4h0M693.6 1008.7h0M694.3 1007.9h0M695.1 1008.6h0M695.8 1008.1h0M696.5 1008.0h0M697.3 1008.2h0M698.0 1008.1h0M698.8 1007.9h0M699.5 1007.7h0M700.2 1007.9h0M701.0 1008.6h0M701.7 1008.8h0M702.5 1008.4h0M703.2 1008.6h0M704.0 1008.0h0M704.7 1008.2h0M705.4 1008.3h0M706.2 1007.9h0M706.9 1007.9h0M707.7 1008.2h0M708.4 1008.1h0M709.2 1007.9h0M709.9 1008.3h0M710.6 1008.1h0M711.4 1008.5h0M712.1 1008.2h0M712.9 1008.1h0M713.6 1008.2h0M714.3 1008.1h0M715.1 1008.0h0M715.8 1008.1h0M716.6 1008.4h0M717.3 1008.4h0M718.1 1008.6h0M718.8 1007.7h0M719.5 1008.1h0M720.3 1008.1h0M721.0 1008.3h0M721.8 1008.1h0M722.5 1008.0h0M723.3 1008.4h0M724.0 1008.3h0M724.7 1007.9h0M725.5 1008.6h0M726.2 1008.5h0M727.0 1008.0h0M727.7 1008.4h0M728.4 1008.0h0M729.2 1008.5h0M729.9 1008.1h0M730.7 1008.0h0M731.4 1008.1h0M732.2 1008.0h0M732.9 1008.3h0M733.6 1008.3h0M734.4 1008.2h0M735.1 1008.0h0M735.9 1007.1h0M736.6 1008.2h0M737.3 1007.6h0M738.1 1008.3h0M738.8 1008.5h0M739.6 1008.3h0M740.3 1008.1h0M741.1 1008.1h0M741.8 1008.2h0M742.5 1008.0h0M743.3 1008.0h0M744.0 1007.9h0M744.8 1008.6h0M745.5 1008.2h0M746.3 1008.5h0M747.0 1008.1h0M747.7 1008.2h0M748.5 1008.1h0M749.2 1008.3h0M750.0 1008.4h0M750.7 1008.3h0M751.4 1008.0h0M752.2 1008.0h0M752.9 1008.7h0M753.7 1008.1h0M754.4 1008.1h0M755.2 1008.6h0M755.9 1008.5h0M756.6 1008.4h0M757.4 1008.1h0M758.1 1008.9h0M758.9 1008.3h0M759.6 1008.4h0M760.4 1008.1h0M761.1 1007.8h0M761.8 1007.8h0M762.6 1008.3h0M763.3 1008.3h0M764.1 1008.1h0M764.8 1007.8h0M765.5 1007.8h0M766.3 1008.1h0M767.0 1007.8h0M767.8 1008.5h0M768.5 1008.5h0M769.3 1009.0h0M770.0 1008.5h0M770.7 1008.0h0M771.5 1007.9h0M772.2 1007.2h0M773.0 1008.0h0M773.7 1008.1h0M774.5 1008.5h0M775.2 1008.4h0M775.9 1008.4h0M776.7 1008.3h0M777.4 1008.4h0M778.2 1008.6h0M778.9 1007.9h0M779.6 1008.1h0M780.4 1007.8h0M781.1 1008.7h0M781.9 1008.6h0M782.6 1008.4h0M783.4 1007.8h0M784.1 1008.3h0M784.8 1008.1h0M785.6 1008.2h0M786.3 1008.1h0M787.1 1008.4h0M787.8 1008.1h0M788.5 1008.5h0M789.3 1008.3h0M790.0 1008.1h0M790.8 1008.2h0M791.5 1008.1h0M792.3 1008.4h0M793.0 1008.1h0M793.7 1008.3h0M794.5 1008.1h0M795.2 1007.8h0M796.0 1008.5h0M796.7 1007.9h0M797.5 1008.4h0M798.2 1008.3h0M798.9 1007.7h0M799.7 1007.9h0M800.4 1008.0h0M801.2 1008.0h0M801.9 1007.8h0M802.6 1008.4h0M803.4 1008.1h0M804.1 1008.3h0M804.9 1008.1h0M805.6 1008.3h0M806.4 1008.0h0M807.1 1008.2h0M807.8 1008.4h0M808.6 1008.2h0M809.3 1008.1h0M810.1 1007.9h0M810.8 1008.3h0M811.5 1008.3h0M812.3 1008.1h0M813.0 1008.0h0M813.8 1008.4h0M814.5 1008.9h0M815.3 1008.1h0M816.0 1008.3h0M816.7 1008.3h0M817.5 1007.4h0M818.2 1008.2h0M819.0 1008.0h0M819.7 1008.6h0M820.5 1008.1h0M821.2 1008.0h0M821.9 1008.1h0M822.7 1008.2h0M823.4 1008.0h0M824.2 1008.2h0M824.9 1007.8h0M825.6 1008.1h0M826.4 1008.4h0M827.1 1008.8h0M827.9 1008.4h0M828.6 1008.3h0M829.4 1008.6h0M830.1 1008.5h0M830.8 1008.7h0M831.6 1008.5h0M832.3 1008.2h0M833.1 1008.3h0M833.8 1008.3h0M834.6 1008.3h0M835.3 1008.3h0M836.0 1008.0h0M836.8 1007.6h0M837.5 1008.0h0M838.3 1007.6h0M839.0 1008.2h0M839.7 1008.2h0M840.5 1007.7h0M841.2 1008.4h0M842.0 1008.5h0M842.7 1008.2h0M843.5 1008.7h0M844.2 1008.8h0M844.9 1007.8h0M845.7 1008.5h0M846.4 1008.3h0M847.2 1008.3h0M847.9 1008.5h0M848.7 1008.0h0M849.4 1008.0h0M850.1 1008.0h0M850.9 1008.0h0M851.6 1008.2h0M852.4 1007.8h0M853.1 1007.9h0M853.8 1008.4h0M854.6 1008.2h0M855.3 1008.3h0M856.1 1007.6h0M856.8 1008.0h0M857.6 1008.0h0M858.3 1008.2h0M859.0 1008.0h0M859.8 1008.5h0M860.5 1008.2h0M861.3 1008.2h0M862.0 1008.2h0M862.7 1008.4h0M863.5 1008.1h0M864.2 1008.5h0M865.0 1008.3h0M865.7 1008.2h0M866.5 1008.2h0M867.2 1008.4h0M867.9 1008.5h0M868.7 1008.5h0M869.4 1008.3h0M870.2 1008.5h0M870.9 1008.2h0M871.7 1008.6h0M872.4 1008.2h0M873.1 1007.6h0M873.9 1008.6h0M874.6 1008.2h0M875.4 1007.8h0M876.1 1008.1h0M876.8 1007.9h0M877.6 1008.8h0M878.3 1008.3h0M879.1 1007.7h0M879.8 1008.4h0M880.6 1008.1h0M881.3 1008.8h0M882.0 1007.9h0M882.8 1007.5h0M883.5 1008.2h0M884.3 1008.1h0M885.0 1008.1h0M885.8 1007.6h0M886.5 1008.3h0M887.2 1008.7h0M888.0 1007.6h0M888.7 1008.6h0M889.5 1008.0h0M890.2 1008.9h0M890.9 1008.3h0M891.7 1008.1h0M892.4 1008.5h0M893.2 1008.4h0M893.9 1008.0h0M894.7 1008.4h0M895.4 1008.0h0M896.1 1007.7h0M896.9 1008.8h0M897.6 1008.1h0M898.4 1008.0h0M899.1 1008.3h0M899.8 1007.7h0M900.6 1007.8h0M901.3 1008.1h0M902.1 1008.0h0M902.8 1008.2h0M903.6 1008.5h0M904.3 1008.1h0M905.0 1008.3h0M905.8 1008.4h0M906.5 1007.9h0M907.3 1008.3h0M908.0 1007.9h0M908.8 1008.5h0M909.5 1008.3h0M910.2 1008.2h0M911.0 1007.8h0M911.7 1008.2h0M912.5 1008.0h0M913.2 1008.4h0M913.9 1008.2h0M914.7 1008.0h0M915.4 1008.5h0M916.2 1008.4h0M916.9 1008.0h0M917.7 1008.5h0M918.4 1008.1h0M919.1 1008.1h0M919.9 1008.2h0M920.6 1008.0h0M921.4 1008.1h0M922.1 1008.2h0M922.8 1008.7h0M923.6 1008.6h0M924.3 1008.1h0M925.1 1008.7h0M925.8 1008.2h0M926.6 1008.1h0M927.3 1007.9h0M928.0 1007.4h0M928.8 1007.7h0M929.5 1006.7h0M930.3 1005.9h0M931.0 1006.4h0M931.8 1005.5h0M932.5 1005.2h0M933.2 1004.1h0M934.0 1005.0h0M934.7 1004.6h0M935.5 1004.5h0M936.2 1004.6h0M936.9 1004.8h0M937.7 1004.4h0M938.4 1004.7h0M939.2 1004.3h0M939.9 1004.4h0M940.7 1004.9h0M941.4 1004.8h0M942.1 1004.3h0M942.9 1004.9h0M943.6 1004.7h0M944.4 1004.6h0M945.1 1005.0h0M945.9 1004.8h0M946.6 1004.5h0M947.3 1004.7h0M948.1 1005.6h0M948.8 1004.7h0M949.6 1005.3h0M950.3 1005.5h0M951.0 1005.5h0M951.8 1005.0h0M952.5 1005.3h0M953.3 1005.5h0M954.0 1005.8h0M954.8 1005.4h0M955.5 1005.3h0M956.2 1005.9h0M957.0 1006.0h0M957.7 1005.8h0M958.5 1005.5h0M959.2 1005.8h0M960.0 1005.8h0M960.7 1006.0h0M961.4 1005.4h0M962.2 1005.9h0M962.9 1005.8h0M963.7 1005.5h0M964.4 1005.9h0M965.1 1005.9h0M965.9 1005.8h0M966.6 1006.1h0M967.4 1005.5h0M968.1 1006.0h0M968.9 1006.1h0M969.6 1006.1h0M970.3 1006.4h0M971.1 1005.7h0M971.8 1005.7h0M972.6 1006.2h0M973.3 1006.3h0M974.0 1006.8h0M974.8 1006.4h0M975.5 1005.9h0M976.3 1006.4h0M977.0 1005.9h0M977.8 1005.6h0M978.5 1006.8h0M979.2 1006.1h0M980.0 1006.2h0M980.7 1006.1h0M981.5 1006.5h0M982.2 1006.0h0M983.0 1006.2h0M983.7 1005.5h0M984.4 1005.4h0M985.2 1006.3h0M985.9 1006.4h0M986.7 1006.3h0M987.4 1006.4h0M988.1 1006.5h0M988.9 1006.4h0M989.6 1007.3h0M990.4 1007.2h0M991.1 1007.3h0M991.9 1007.4h0M992.6 1007.8h0M993.3 1007.8h0M994.1 1008.0h0M994.8 1007.6h0M995.6 1008.2h0M996.3 1008.7h0M997.0 1007.8h0M997.8 1008.0h0M998.5 1008.3h0M999.3 1008.3h0M1000.0 1008.2h0M1000.8 1007.5h0M1001.5 1008.2h0M1002.2 1007.6h0M1003.0 1007.8h0M1003.7 1008.2h0M1004.5 1007.9h0M1005.2 1008.2h0M1006.0 1009.0h0M1006.7 1008.2h0M1007.4 1008.2h0M1008.2 1007.7h0M1008.9 1007.8h0M1009.7 1007.7h0M1010.4 1007.9h0M1011.1 1007.7h0M1011.9 1007.8h0M1012.6 1007.9h0M1013.4 1007.7h0M1014.1 1007.6h0M1014.9 1007.6h0M1015.6 1008.1h0M1016.3 1008.0h0M1017.1 1008.3h0M1017.8 1008.3h0M1018.6 1007.9h0M1019.3 1008.2h0M1020.1 1007.6h0M1020.8 1008.7h0M1021.5 1008.4h0M1022.3 1008.0h0M1023.0 1007.7h0M1023.8 1008.1h0M1024.5 1007.5h0M1025.2 1007.8h0M1026.0 1008.2h0M1026.7 1008.0h0M1027.5 1007.9h0M1028.2 1008.3h0M1029.0 1007.7h0M1029.7 1008.1h0M1030.4 1007.9h0M1031.2 1007.8h0M1031.9 1008.2h0M1032.7 1007.7h0M1033.4 1008.6h0M1034.2 1007.9h0M1034.9 1008.6h0M1035.6 1007.7h0M1036.4 1008.2h0M1037.1 1007.7h0M1037.9 1007.6h0M1038.6 1008.1h0M1039.3 1008.2h0M1040.1 1007.6h0M1040.8 1008.4h0M1041.6 1007.8h0M1042.3 1008.1h0M1043.1 1008.1h0M1043.8 1008.2h0M1044.5 1007.5h0M1045.3 1008.5h0M1046.0 1008.2h0M1046.8 1007.9h0M1047.5 1007.7h0M1048.2 1007.5h0M1049.0 1007.6h0M1049.7 1008.2h0M1050.5 1007.9h0M1051.2 1007.7h0M1052.0 1007.9h0M1052.7 1008.5h0M1053.4 1007.9h0M1054.2 1007.9h0M1054.9 1008.4h0M1055.7 1008.2h0M1056.4 1008.1h0M1057.2 1007.9h0M1057.9 1007.6h0M1058.6 1007.7h0M1059.4 1007.9h0M1060.1 1008.0h0M1060.9 1008.1h0M1061.6 1008.2h0M1062.3 1008.1h0M1063.1 1008.1h0M1063.8 1007.7h0M1064.6 1007.4h0M1065.3 1007.9h0M1066.1 1007.8h0M1066.8 1007.9h0M1067.5 1008.0h0M1068.3 1007.7h0M1069.0 1007.7h0M1069.8 1008.0h0M1070.5 1008.1h0M1071.2 1007.9h0M1072.0 1008.2h0M1072.7 1008.0h0M1073.5 1007.7h0M1074.2 1008.1h0M1075.0 1008.6h0M1075.7 1007.8h0M1076.4 1008.4h0M1077.2 1008.5h0M1077.9 1008.5h0M1078.7 1007.8h0M1079.4 1008.7h0M1080.2 1008.1h0M1080.9 1008.0h0M1081.6 1008.0h0M1082.4 1008.2h0M1083.1 1008.1h0M1083.9 1008.0h0M1084.6 1008.4h0M1085.3 1007.8h0M1086.1 1007.7h0M1086.8 1008.3h0M1087.6 1008.3h0M1088.3 1008.4h0M1089.1 1007.7h0M1089.8 1008.4h0M1090.5 1008.2h0M1091.3 1008.6h0M1092.0 1007.7h0M1092.8 1008.1h0M1093.5 1008.0h0M1094.3 1007.6h0M1095.0 1007.9h0M1095.7 1008.4h0M1096.5 1007.9h0M1097.2 1007.8h0M1098.0 1008.3h0M1098.7 1008.4h0M1099.4 1008.4h0M1100.2 1007.8h0M1100.9 1008.1h0M1101.7 1008.4h0M1102.4 1007.9h0M1103.2 1007.8h0M1103.9 1008.3h0M1104.6 1008.5h0M1105.4 1007.7h0M1106.1 1007.3h0M1106.9 1007.6h0M1107.6 1007.8h0M1108.3 1008.0h0M1109.1 1008.3h0M1109.8 1008.0h0M1110.6 1007.9h0M1111.3 1008.1h0M1112.1 1007.8h0M1112.8 1008.1h0M1113.5 1007.9h0M1114.3 1008.9h0M1115.0 1008.3h0M1115.8 1007.8h0M1116.5 1007.8h0M1117.3 1007.9h0M1118.0 1007.6h0M1118.7 1007.9h0M1119.5 1007.9h0M1120.2 1008.3h0M1121.0 1008.0h0M1121.7 1007.8h0M1122.4 1007.7h0M1123.2 1007.7h0M1123.9 1008.1h0M1124.7 1008.0h0M1125.4 1008.4h0M1126.2 1007.9h0M1126.9 1008.4h0M1127.6 1008.2h0M1128.4 1008.1h0M1129.1 1007.5h0M1129.9 1007.7h0M1130.6 1008.3h0M1131.4 1008.5h0M1132.1 1008.2h0M1132.8 1008.3h0M1133.6 1008.0h0M1134.3 1008.0h0M1135.1 1007.9h0M1135.8 1008.4h0M1136.5 1008.2h0M1137.3 1008.0h0M1138.0 1008.0h0M1138.8 1008.3h0M1139.5 1008.2h0M1140.3 1007.8h0M1141.0 1008.6h0M1141.7 1008.2h0M1142.5 1008.1h0M1143.2 1008.5h0M1144.0 1008.4h0M1144.7 1008.1h0M1145.5 1008.3h0M1146.2 1007.8h0M1146.9 1007.9h0M1147.7 1007.4h0M1148.4 1008.5h0M1149.2 1007.5h0M1149.9 1008.3h0M1150.6 1007.9h0M1151.4 1007.8h0M1152.1 1008.0h0M1152.9 1008.2h0M1153.6 1008.3h0M1154.4 1008.6h0M1155.1 1008.2h0M1155.8 1008.4h0M1156.6 1007.9h0M1157.3 1008.3h0M1158.1 1008.2h0M1158.8 1008.0h0M1159.5 1008.1h0M1160.3 1008.1h0M1161.0 1008.2h0M1161.8 1008.2h0M1162.5 1008.0h0M1163.3 1007.9h0M1164.0 1008.3h0M1164.7 1007.6h0M1165.5 1007.9h0M1166.2 1008.6h0M1167.0 1007.3h0M1167.7 1007.9h0M1168.5 1008.3h0M1169.2 1007.6h0M1169.9 1008.9h0M1170.7 1007.3h0M1171.4 1008.5h0M1172.2 1008.6h0M1172.9 1008.4h0M1173.6 1008.0h0M1174.4 1008.2h0M1175.1 1007.8h0M1175.9 1008.4h0M1176.6 1007.8h0M1177.4 1008.0h0M1178.1 1008.4h0M1178.8 1007.8h0M1179.6 1008.0h0M1180.3 1008.2h0M1181.1 1007.7h0M1181.8 1008.5h0M1182.5 1008.2h0M1183.3 1007.7h0M1184.0 1008.1h0M1184.8 1007.9h0M1185.5 1007.9h0M1186.3 1008.1h0M1187.0 1007.9h0M1187.7 1008.4h0M1188.5 1007.9h0M1189.2 1008.4h0M1190.0 1008.1h0M1190.7 1008.4h0M1191.5 1008.0h0M1192.2 1008.0h0M1192.9 1007.8h0M1193.7 1008.3h0M1194.4 1008.4h0M1195.2 1008.8h0M1195.9 1008.5h0M1196.6 1008.2h0M1197.4 1008.1h0M1198.1 1008.2h0M1198.9 1008.1h0M1199.6 1008.6h0M1200.4 1008.4h0M1201.1 1007.9h0M1201.8 1007.9h0M1202.6 1008.5h0M1203.3 1008.2h0M1204.1 1008.1h0M1204.8 1008.5h0M1205.6 1008.0h0M1206.3 1008.1h0M1207.0 1008.0h0M1207.8 1007.5h0M1208.5 1008.4h0M1209.3 1007.8h0M1210.0 1008.0h0M1210.7 1007.9h0M1211.5 1008.4h0M1212.2 1008.1h0M1213.0 1008.1h0M1213.7 1007.6h0M1214.5 1008.1h0M1215.2 1007.7h0M1215.9 1008.2h0M1216.7 1008.3h0M1217.4 1008.1h0M1218.2 1008.8h0M1218.9 1008.3h0M1219.6 1008.3h0M1220.4 1008.2h0M1221.1 1008.1h0M1221.9 1008.4h0M1222.6 1008.5h0M1223.4 1007.8h0M1224.1 1008.5h0M1224.8 1008.3h0M1225.6 1008.4h0M1226.3 1008.3h0M1227.1 1007.8h0M1227.8 1007.8h0M1228.6 1008.7h0M1229.3 1008.2h0M1230.0 1007.7h0M1230.8 1008.3h0M1231.5 1008.0h0M1232.3 1007.6h0M1233.0 1007.5h0M1233.7 1007.7h0M1234.5 1008.2h0M1235.2 1008.1h0M1236.0 1008.1h0M1236.7 1008.2h0M1237.5 1008.3h0M1238.2 1007.5h0M1238.9 1008.1h0M1239.7 1007.9h0M1240.4 1007.8h0M1241.2 1008.0h0M1241.9 1008.1h0M1242.7 1008.1h0M1243.4 1007.7h0M1244.1 1008.0h0M1244.9 1008.8h0M1245.6 1007.8h0M1246.4 1007.7h0M1247.1 1008.2h0M1247.8 1008.3h0M1248.6 1008.3h0M1249.3 1007.8h0M1250.1 1008.5h0M1250.8 1007.9h0M1251.6 1007.8h0M1252.3 1008.0h0M1253.0 1008.1h0M1253.8 1008.4h0M1254.5 1008.4h0M1255.3 1008.2h0M1256.0 1008.4h0M1256.8 1008.2h0M1257.5 1008.4h0M1258.2 1007.7h0M1259.0 1007.7h0M1259.7 1008.4h0M1260.5 1007.8h0M1261.2 1008.1h0M1261.9 1008.1h0M1262.7 1008.0h0M1263.4 1008.0h0M1264.2 1008.6h0M1264.9 1007.4h0M1265.7 1008.4h0M1266.4 1008.9h0M1267.1 1008.2h0M1267.9 1008.2h0M1268.6 1008.4h0M1269.4 1008.7h0M1270.1 1007.8h0M1270.8 1008.2h0M1271.6 1008.1h0M1272.3 1008.3h0M1273.1 1008.2h0M1273.8 1008.4h0M1274.6 1008.1h0M1275.3 1008.2h0M1276.0 1008.0h0M1276.8 1008.0h0M1277.5 1008.1h0M1278.3 1008.1h0M1279.0 1007.8h0M1279.8 1008.7h0M1280.5 1008.1h0M1281.2 1007.8h0M1282.0 1008.5h0M1282.7 1008.0h0M1283.5 1008.3h0M1284.2 1008.2h0M1284.9 1008.3h0M1285.7 1008.2h0M1286.4 1008.0h0M1287.2 1008.2h0M1287.9 1008.8h0M1288.7 1007.5h0M1289.4 1008.2h0M1290.1 1008.3h0M1290.9 1007.9h0M1291.6 1007.8h0M1292.4 1008.8h0M1293.1 1008.1h0M1293.8 1008.8h0M1294.6 1008.4h0M1295.3 1008.2h0M1296.1 1008.3h0M1296.8 1008.4h0M1297.6 1008.6h0M1298.3 1008.3h0M1299.0 1008.2h0M1299.8 1008.3h0M1300.5 1008.6h0M1301.3 1008.4h0M1302.0 1007.9h0M1302.8 1008.0h0M997.5 1000.4h0M970.0 1004.2h0M1019.5 1003.9h0M1080.7 1005.0h0M1091.4 1006.3h0" stroke="#000" stroke-width="3.3" stroke-linecap="round" fill="none"/>
<path d="M715.4 959.2 L719.2 959.2 L717.3 955.9 Z" fill="#ff0000"/>
<rect x="105.5" y="954.5" width="1380.0" height="57.0" fill="none" stroke="#000" stroke-width="1.0" shape-rendering="crispEdges"/>
<line x1="162.5" y1="1011.5" x2="162.5" y2="1016.4" stroke="#000" stroke-width="1.1"/>
<text x="162.5" y="1032.1" font-size="14.17" text-anchor="middle" textLength="8.8" lengthAdjust="spacingAndGlyphs">0</text>
<line x1="347.5" y1="1011.5" x2="347.5" y2="1016.4" stroke="#000" stroke-width="1.1"/>
<text x="347.5" y="1032.1" font-size="14.17" text-anchor="middle" textLength="26.2" lengthAdjust="spacingAndGlyphs">250</text>
<line x1="533.5" y1="1011.5" x2="533.5" y2="1016.4" stroke="#000" stroke-width="1.1"/>
<text x="533.5" y="1032.1" font-size="14.17" text-anchor="middle" textLength="26.2" lengthAdjust="spacingAndGlyphs">500</text>
<line x1="718.5" y1="1011.5" x2="718.5" y2="1016.4" stroke="#000" stroke-width="1.1"/>
<text x="718.5" y="1032.1" font-size="14.17" text-anchor="middle" textLength="26.2" lengthAdjust="spacingAndGlyphs">750</text>
<line x1="904.5" y1="1011.5" x2="904.5" y2="1016.4" stroke="#000" stroke-width="1.1"/>
<text x="904.5" y="1032.1" font-size="14.17" text-anchor="middle" textLength="35.1" lengthAdjust="spacingAndGlyphs">1000</text>
<line x1="1089.5" y1="1011.5" x2="1089.5" y2="1016.4" stroke="#000" stroke-width="1.1"/>
<text x="1089.5" y="1032.1" font-size="14.17" text-anchor="middle" textLength="35.1" lengthAdjust="spacingAndGlyphs">1250</text>
<line x1="1275.5" y1="1011.5" x2="1275.5" y2="1016.4" stroke="#000" stroke-width="1.1"/>
<text x="1275.5" y="1032.1" font-size="14.17" text-anchor="middle" textLength="35.1" lengthAdjust="spacingAndGlyphs">1500</text>
<line x1="1460.5" y1="1011.5" x2="1460.5" y2="1016.4" stroke="#000" stroke-width="1.1"/>
<text x="1460.5" y="1032.1" font-size="14.17" text-anchor="middle" textLength="35.1" lengthAdjust="spacingAndGlyphs">1750</text>
<line x1="100.6" y1="1009.5" x2="105.5" y2="1009.5" stroke="#000" stroke-width="1.0" shape-rendering="crispEdges"/>
<text x="95.1" y="1013.9" font-size="14.17" text-anchor="end" textLength="8.8" lengthAdjust="spacingAndGlyphs">0</text>
<line x1="100.6" y1="983.5" x2="105.5" y2="983.5" stroke="#000" stroke-width="1.0" shape-rendering="crispEdges"/>
<text x="95.1" y="987.9" font-size="14.17" text-anchor="end" textLength="8.8" lengthAdjust="spacingAndGlyphs">5</text>
<line x1="100.6" y1="957.5" x2="105.5" y2="957.5" stroke="#000" stroke-width="1.0" shape-rendering="crispEdges"/>
<text x="95.1" y="961.9" font-size="14.17" text-anchor="end" textLength="17.6" lengthAdjust="spacingAndGlyphs">10</text>
<line x1="102.7" y1="996.5" x2="105.5" y2="996.5" stroke="#000" stroke-width="0.8"/>
<line x1="102.7" y1="970.4" x2="105.5" y2="970.4" stroke="#000" stroke-width="0.8"/>
<text x="0" y="0" font-size="14.17" text-anchor="middle" transform="translate(68.5,984) rotate(-90)" textLength="13.5" lengthAdjust="spacingAndGlyphs">dr</text>
<defs><clipPath id="c2"><rect x="105.4" y="380.6" width="1380.2" height="285.7"/></clipPath></defs>
</svg></body></html>
